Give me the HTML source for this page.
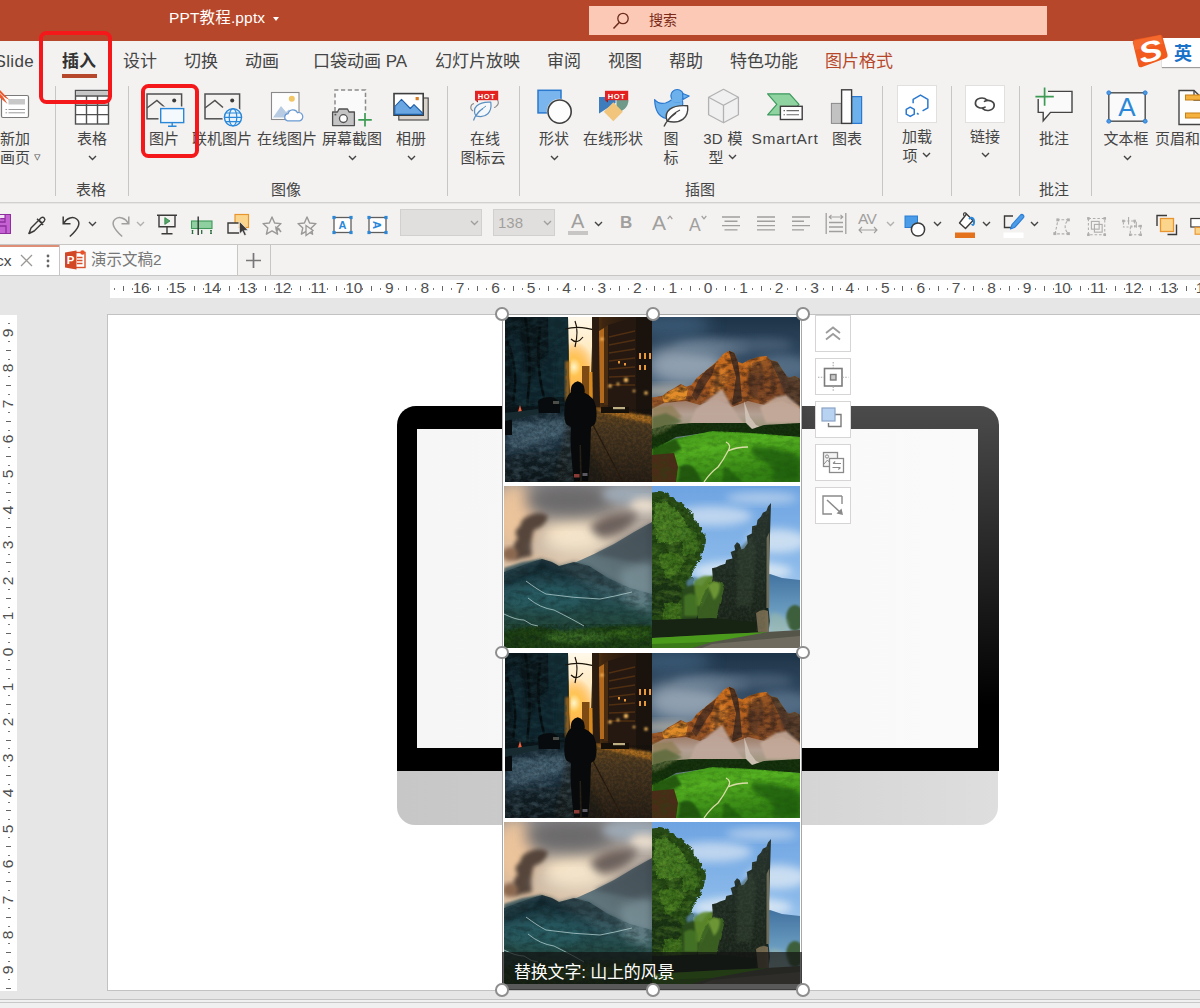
<!DOCTYPE html>
<html lang="zh-CN">
<head>
<meta charset="utf-8">
<title>PPT教程.pptx - PowerPoint</title>
<style>
*{box-sizing:border-box;margin:0;padding:0}
html,body{width:1200px;height:1008px;overflow:hidden;background:#e6e6e6}
body{position:relative;font-family:"Liberation Sans","Noto Sans CJK SC",sans-serif;color:#444;font-size:14px}
.abs{position:absolute}
svg{display:block;overflow:visible}
/* title bar */
#titlebar{position:absolute;left:0;top:0;width:1200px;height:41px;background:#b7472a}
#title{position:absolute;left:169px;top:8px;color:#fff;font-size:15.5px;letter-spacing:0.15px;line-height:20px;white-space:nowrap}
#search{position:absolute;left:589px;top:6px;width:458px;height:29px;background:#fbc9b6}
#search span{position:absolute;left:60px;top:4px;font-size:14px;line-height:20px;color:#7a2a17}
/* ribbon */
#ribbon{position:absolute;left:0;top:41px;width:1200px;height:162px;background:#f3f2f1;border-bottom:1px solid #d2d0ce}
.tab{position:absolute;top:9px;font-size:17px;line-height:24px;color:#444;white-space:nowrap}
.lbl{position:absolute;font-size:15px;line-height:19px;color:#444;white-space:nowrap;text-align:center;transform:translateX(-50%)}
.glbl{position:absolute;top:139px;font-size:15px;line-height:19px;color:#444;white-space:nowrap;transform:translateX(-50%)}
.sep{position:absolute;top:45px;width:1px;height:110px;background:#c8c6c4}
.ico{position:absolute}
.chev{position:absolute;width:9px;height:6px}
.redbox{position:absolute;border:4px solid #f4181b;border-radius:7.5px}
/* toolbar */
#qat{position:absolute;left:0;top:204px;width:1200px;height:41px;background:#f3f2f1;border-bottom:1px solid #c8c6c4}
/* doc tabs */
#doctabs{position:absolute;left:0;top:245px;width:1200px;height:31px;background:#f3f2f1;border-bottom:1px solid #c8c6c4}
/* workspace */
#work{position:absolute;left:0;top:276px;width:1200px;height:732px;background:#e6e6e6;overflow:hidden}
#hruler{position:absolute;left:110px;top:4px;width:1090px;height:18px;background:#fff}
#vruler{position:absolute;left:0;top:39px;width:17px;height:676px;background:#fff}
#slide{position:absolute;left:107px;top:38px;width:1202px;height:677px;background:#fff;border:1px solid #c2c2c2}

#hruler{overflow:hidden}
#vruler{overflow:hidden}
.rn{position:absolute;top:-1px;font-size:15.5px;line-height:18px;color:#505050;transform:translateX(-50%);letter-spacing:-0.3px}
.rt{position:absolute;top:6px;width:1px;height:5px;background:#666}
.rd{position:absolute;top:8px;width:1px;height:1.5px;background:#777}
.vn{position:absolute;left:8px;font-size:15.5px;line-height:18px;height:18px;color:#444;transform:translate(-50%,-50%) rotate(-90deg);letter-spacing:-0.3px;color:#505050}
.vt{position:absolute;left:6px;width:5px;height:1px;background:#666}
.vd{position:absolute;left:8px;width:1.5px;height:1px;background:#777}

.hd{position:absolute;width:13.6px;height:13.6px;border-radius:50%;background:#fff;border:2px solid #8e8e8e}
.fb{position:absolute;width:36px;height:37px;background:#fff;border:1px solid #d6d4d4}
</style>
</head>
<body>

<!-- ============ TITLE BAR ============ -->
<div id="titlebar">
  <div id="title">PPT教程.pptx <span style="display:inline-block;width:0;height:0;border-left:3.5px solid transparent;border-right:3.5px solid transparent;border-top:4px solid #fff;position:relative;top:-2px;left:3px"></span></div>
  <div id="search">
    <svg class="abs" style="left:22px;top:5px" width="20" height="20" viewBox="0 0 20 20"><circle cx="12" cy="7.5" r="5.2" fill="none" stroke="#6b2a1a" stroke-width="1.3"/><path d="M8.2 11.4 L2.5 17.5" stroke="#6b2a1a" stroke-width="1.5" fill="none"/></svg>
    <span>搜索</span>
  </div>
</div>

<!-- ============ RIBBON ============ -->
<div id="ribbon">
<div class="tab" style="left:-5.5px;letter-spacing:0.35px">Slide</div>
<div class="tab" style="left:62px;font-weight:bold;color:#333;">插入</div>
<div class="tab" style="left:123px;">设计</div>
<div class="tab" style="left:184px;">切换</div>
<div class="tab" style="left:245px;">动画</div>
<div class="tab" style="left:313px;">口袋动画 PA</div>
<div class="tab" style="left:435px;">幻灯片放映</div>
<div class="tab" style="left:547px;">审阅</div>
<div class="tab" style="left:608px;">视图</div>
<div class="tab" style="left:669px;">帮助</div>
<div class="tab" style="left:730px;">特色功能</div>
<div class="tab" style="left:825px;color:#b7472a;">图片格式</div>
<div class="abs" style="left:62px;top:33px;width:35px;height:4px;background:#b7472a"></div>

<div class="sep" style="left:55px"></div>
<div class="sep" style="left:128px"></div>
<div class="sep" style="left:447px"></div>
<div class="sep" style="left:519px"></div>
<div class="sep" style="left:882px"></div>
<div class="sep" style="left:951px"></div>
<div class="sep" style="left:1019px"></div>
<div class="sep" style="left:1091px"></div>
<div class="lbl" style="left:15px;top:88px">新加</div>
<div class="lbl" style="left:15px;top:107px">画页</div>
<div class="abs" style="left:34px;top:108px;font-size:13px;color:#555">▿</div>
<div class="lbl" style="left:92px;top:88px">表格</div>
<svg class="chev" style="left:87.5px;top:114px" viewBox="0 0 9 6"><path d="M1 1 L4.5 4.5 L8 1" fill="none" stroke="#444" stroke-width="1.4"/></svg>
<div class="lbl" style="left:164px;top:88px">图片</div>
<div class="lbl" style="left:222px;top:88px">联机图片</div>
<div class="lbl" style="left:287px;top:88px">在线图片</div>
<div class="lbl" style="left:352px;top:88px">屏幕截图</div>
<svg class="chev" style="left:347.5px;top:114px" viewBox="0 0 9 6"><path d="M1 1 L4.5 4.5 L8 1" fill="none" stroke="#444" stroke-width="1.4"/></svg>
<div class="lbl" style="left:411px;top:88px">相册</div>
<svg class="chev" style="left:406.5px;top:114px" viewBox="0 0 9 6"><path d="M1 1 L4.5 4.5 L8 1" fill="none" stroke="#444" stroke-width="1.4"/></svg>
<div class="lbl" style="left:485px;top:88px">在线</div>
<div class="lbl" style="left:483px;top:107px">图标云</div>
<div class="lbl" style="left:554px;top:88px">形状</div>
<svg class="chev" style="left:549.5px;top:114px" viewBox="0 0 9 6"><path d="M1 1 L4.5 4.5 L8 1" fill="none" stroke="#444" stroke-width="1.4"/></svg>
<div class="lbl" style="left:613px;top:88px">在线形状</div>
<div class="lbl" style="left:671px;top:88px">图</div>
<div class="lbl" style="left:671px;top:107px">标</div>
<div class="lbl" style="left:723px;top:88px;letter-spacing:0.3px">3D 模</div>
<div class="lbl" style="left:716px;top:107px">型</div>
<svg class="chev" style="left:727.5px;top:113px" viewBox="0 0 9 6"><path d="M1 1 L4.5 4.5 L8 1" fill="none" stroke="#444" stroke-width="1.4"/></svg>
<div class="lbl" style="left:785px;top:88px;letter-spacing:0.75px;font-size:15.5px">SmartArt</div>
<div class="lbl" style="left:847px;top:88px">图表</div>
<div class="lbl" style="left:917px;top:86px">加载</div>
<div class="lbl" style="left:910px;top:105px">项</div>
<svg class="chev" style="left:921.5px;top:111px" viewBox="0 0 9 6"><path d="M1 1 L4.5 4.5 L8 1" fill="none" stroke="#444" stroke-width="1.4"/></svg>
<div class="lbl" style="left:985px;top:86px">链接</div>
<svg class="chev" style="left:980.5px;top:111px" viewBox="0 0 9 6"><path d="M1 1 L4.5 4.5 L8 1" fill="none" stroke="#444" stroke-width="1.4"/></svg>
<div class="lbl" style="left:1054px;top:88px">批注</div>
<div class="lbl" style="left:1126px;top:88px">文本框</div>
<svg class="chev" style="left:1122.5px;top:114px" viewBox="0 0 9 6"><path d="M1 1 L4.5 4.5 L8 1" fill="none" stroke="#444" stroke-width="1.4"/></svg>
<div class="lbl" style="left:1155px;top:88px;transform:none">页眉和</div>
<div class="glbl" style="left:91px">表格</div>
<div class="glbl" style="left:286px">图像</div>
<div class="glbl" style="left:700px">插图</div>
<div class="glbl" style="left:1054px">批注</div>
<svg class="abs" style="left:0;top:0" width="1200" height="162" viewBox="0 41 1200 162">
<rect x="1.5" y="95.5" width="27" height="22" rx="1.5" fill="#fff" stroke="#7a7a7a" stroke-width="1.2"/><rect x="8.5" y="99" width="16.5" height="5.5" fill="#c8c8c8"/><path d="M5.5 109.5 h1.6 M8.5 109.5 H25 M5.5 112.8 h1.6 M8.5 112.8 H25" stroke="#9a9a9a" stroke-width="1"/><path d="M-2 88 L9.5 100 L3 96.5 L7.5 104 L-2 96Z" fill="#ea5a2e"/><path d="M-2 91.5 L7 100" stroke="#fff" stroke-width="0.8"/>
<rect x="75.5" y="90.5" width="33" height="33.5" fill="#fff" stroke="#505050" stroke-width="1.4"/><rect x="76.2" y="91.2" width="31.6" height="4.4" fill="#c6c6c6"/><path d="M75.5 96 H108.5 M75.5 105.3 H108.5 M75.5 114.6 H108.5 M86.5 96 V124 M97.5 96 V124" stroke="#505050" stroke-width="1.4" fill="none"/>
<rect x="147" y="94" width="34.6" height="24.8" fill="none" stroke="#505050" stroke-width="1.5"/><path d="M147 108 L156.9 100.4 L165 107.5" fill="none" stroke="#505050" stroke-width="1.5"/><circle cx="174.2" cy="100.6" r="2" fill="#3a3a3a"/><rect x="158.5" y="106.5" width="27" height="14" fill="#f3f2f1"/><rect x="160.7" y="108.6" width="23" height="14" fill="#f4f9fe" stroke="#2b88d8" stroke-width="1.4"/><path d="M172.2 122.6 V126 M168 126.3 H176.5" stroke="#2b88d8" stroke-width="1.4"/>
<rect x="205" y="94" width="34.6" height="24.8" fill="none" stroke="#505050" stroke-width="1.5"/><path d="M205 108 L214.9 100.4 L223 107.5" fill="none" stroke="#505050" stroke-width="1.5"/><circle cx="232.2" cy="100.6" r="2" fill="#3a3a3a"/><circle cx="233" cy="117.3" r="10.6" fill="#f3f2f1"/><circle cx="233" cy="117.3" r="8.6" fill="#e9f3fc" stroke="#2b88d8" stroke-width="1.4"/><ellipse cx="233" cy="117.3" rx="3.8" ry="8.6" fill="none" stroke="#2b88d8" stroke-width="1.2"/><path d="M224.4 117.3 H241.6 M225.6 113 H240.4 M225.6 121.6 H240.4" stroke="#2b88d8" stroke-width="1.2" fill="none"/>
<rect x="271.5" y="92.5" width="27.5" height="27" fill="#fdfdfd" stroke="#8a8a8a" stroke-width="1.1"/><circle cx="291.8" cy="98.8" r="3" fill="#f2c664"/><path d="M273 117.5 L281 106 L286 112 L289 109.5 L294 117.5Z" fill="#b7cbe2"/><path d="M287.5 120.8 a3.6 3.6 0 0 1 0.6 -7.1 a5 5 0 0 1 9.4 -1 a4 4 0 0 1 2.2 8.1 Z" fill="#fff" stroke="#6a9ad2" stroke-width="1.2"/>
<rect x="335" y="90" width="30.5" height="30" fill="#fafafa"/><path d="M335 118 V90 H365.5 V113" fill="none" stroke="#8a8a8a" stroke-width="1.5" stroke-dasharray="4.2 2.6"/><path d="M332.6 112 H337.5 L339 109 H347.5 L349 112 H354.4 V125.6 H332.6Z" fill="#c4c4c4" stroke="#505050" stroke-width="1.3" stroke-linejoin="round"/><circle cx="343.4" cy="118.6" r="3.9" fill="#fff" stroke="#505050" stroke-width="1.3"/><rect x="334.5" y="113.8" width="1.8" height="1.6" fill="#505050"/><path d="M365 113 V126.5 M358.3 119.8 H371.8" stroke="#3c9a54" stroke-width="1.7"/>
<rect x="398.8" y="98" width="29.4" height="22" fill="#d9d3cc" stroke="#505050" stroke-width="1.2"/><rect x="394" y="93.6" width="29.2" height="21.6" fill="#fff" stroke="#3e3e3e" stroke-width="1.6"/><path d="M394.8 106.5 L401.5 99.3 L410.3 108.5 L414 104.6 L422.4 113 V114.4 H394.8Z" fill="#69a6e2" stroke="#1f5fa8" stroke-width="1.1" stroke-linejoin="round"/><rect x="415.6" y="97" width="3.2" height="3.2" fill="#d97b22"/>
<path d="M474 103.5 a4 4 0 0 0 -1 7.5 M493 98 a4.5 4.5 0 0 1 3.5 8 a3 3 0 0 1 -2.5 1.5" fill="none" stroke="#8a8a8a" stroke-width="1.1"/><path d="M473.5 120.5 Q476 113 483 108.5 M475.8 115.8 C471.5 108 478 101.5 490.8 102.2 C492.2 112 486.5 118.8 475.8 115.8Z" fill="#f4f8fb" stroke="#5b8fc0" stroke-width="1.2" stroke-linejoin="round"/><path d="M476.5 115 Q480 109.5 486 106" fill="none" stroke="#5b8fc0" stroke-width="1"/><rect x="475" y="90.8" width="23.2" height="9.4" fill="#e3211f"/><path d="M475 100.2 l3 2.2 v-2.2z" fill="#a01010"/><text x="486.6" y="98.6" font-size="7.6" font-weight="bold" fill="#fff" text-anchor="middle" font-family="Liberation Sans,sans-serif" letter-spacing="0.6">HOT</text>
<rect x="538" y="90.3" width="23" height="22.6" fill="#7ab5ee" stroke="#2a78cf" stroke-width="1.5"/><circle cx="559.6" cy="111.6" r="12.8" fill="#f3f2f1"/><circle cx="559.6" cy="111.6" r="11.6" fill="#fdfdfd" stroke="#3e3e3e" stroke-width="1.6"/>
<path d="M599 97 H615.5 V103 L599 113.5Z" fill="#3e7dbd"/><path d="M616.5 100 H628.5 A12 12 0 0 1 616.5 112Z" fill="#6f9a8a"/><path d="M613.3 102.3 L622.8 111.8 L613.3 121.3 L603.8 111.8Z" fill="#f2c57c"/><rect x="605" y="90.8" width="23.2" height="9.4" fill="#e3211f"/><path d="M605 100.2 l3 2.2 v-2.2z" fill="#a01010"/><text x="616.6" y="98.6" font-size="7.6" font-weight="bold" fill="#fff" text-anchor="middle" font-family="Liberation Sans,sans-serif" letter-spacing="0.6">HOT</text>
<path d="M654.6 99.6 Q659 104.6 665.5 103 Q669.5 101.8 671.6 99.6 L682.5 100.5 Q684 108 678 114 Q672 119.5 666 118.5 C659 117 655 110 654.6 99.6Z" fill="#6db1ec" stroke="#2a78cf" stroke-width="1.2" stroke-linejoin="round"/><circle cx="677.2" cy="95.8" r="6.3" fill="#6db1ec" stroke="#2a78cf" stroke-width="1.2"/><path d="M682.6 93.6 L689.2 96 L683 99.4Z" fill="#6db1ec" stroke="#2a78cf" stroke-width="1.1" stroke-linejoin="round"/><path d="M671.5 99 Q676 103.5 682 100" fill="none" stroke="#6db1ec" stroke-width="2.2"/><path d="M664 126.5 Q667 119.5 676 113 M667 121 C663.5 111 671.5 104.5 687.6 105.8 C689 117.5 681 124.5 667 121Z" fill="#fdfdfd" stroke="#444" stroke-width="1.4" stroke-linejoin="round"/><path d="M668 120.3 Q672 114 680 110" fill="none" stroke="#444" stroke-width="1.2"/>
<path d="M723.5 89.3 L738.4 97.3 V114.8 L723.5 122.8 L708.6 114.8 V97.3Z" fill="#f0f0f0" stroke="#b2b2b2" stroke-width="1.3" stroke-linejoin="round"/><path d="M708.6 97.3 L723.5 105.3 L738.4 97.3 M723.5 105.3 V122.8" fill="none" stroke="#b2b2b2" stroke-width="1.3"/>
<path d="M767.6 93.8 H789.6 L799 104.3 L789.6 114.8 H767.6 L776.8 104.3Z" fill="#8fd3a0" stroke="#3c9a5c" stroke-width="1.2" stroke-linejoin="round"/><rect x="780.4" y="106.3" width="21.8" height="13.2" fill="#fdfdfd" stroke="#3e3e3e" stroke-width="1.4"/><path d="M783.5 110.6 h1.5 M786.5 110.6 H799 M783.5 114.8 h1.5 M786.5 114.8 H799" stroke="#6a6a6a" stroke-width="1.1"/>
<rect x="831.4" y="103.4" width="10" height="20" fill="#c2c2c2" stroke="#8a8a8a" stroke-width="1"/><rect x="851.6" y="96.6" width="10" height="26.8" fill="#6db1ec" stroke="#2a78cf" stroke-width="1.2"/><rect x="841.6" y="89.8" width="10" height="33.6" fill="#fdfdfd" stroke="#3e3e3e" stroke-width="1.4"/>
<rect x="897.5" y="85.5" width="39" height="37" fill="#fff" stroke="#e2e0de" stroke-width="1"/><g transform="translate(917.5 103) scale(1.15) translate(-917.5 -103) translate(-0.5 2.2)"><path d="M914.2 101 V97.6 L920.6 93.9 L927 97.6 V105 L922.4 107.7 M917.5 109.7 L919 110.6" fill="none" stroke="#2a78cf" stroke-width="1.3" stroke-linejoin="round"/><path d="M911.7 104.4 L915.2 106.4 V110.5 L911.7 112.5 L908.2 110.5 V106.4Z" fill="none" stroke="#2a78cf" stroke-width="1.3" stroke-linejoin="round"/></g>
<rect x="965.5" y="85.5" width="39" height="37" fill="#fff" stroke="#e2e0de" stroke-width="1"/><g transform="translate(984.8 104) scale(1.3 1.15) translate(-984.8 -104) translate(0 0.3)"><path d="M986.5 100.2 C983.5 97.2 978 98.5 977.6 102.6 C977.3 106.6 982 108.3 985 106.4 M983 107.6 C986 110.6 991.6 109.4 992 105.2 C992.3 101.2 987.6 99.5 984.6 101.4" fill="none" stroke="#444" stroke-width="1.35" stroke-linecap="round"/></g>
<path d="M1038.2 91.4 H1072 V112.4 H1050.5 L1043.2 120.8 V112.4 H1038.2Z" fill="#fafafa" stroke="#444" stroke-width="1.4" stroke-linejoin="miter"/><rect x="1034" y="87" width="14" height="12" fill="#f3f2f1"/><path d="M1044.6 87.4 V105.8 M1035.4 96.6 H1053.8" stroke="#3c9a54" stroke-width="1.7"/>
<rect x="1108.8" y="92.8" width="36.4" height="28.4" fill="#fafafa" stroke="#555" stroke-width="1.5"/><text x="1127" y="116.2" font-size="26" fill="#2b88d8" text-anchor="middle" font-family="Liberation Sans,sans-serif">A</text><circle cx="1108.8" cy="92.8" r="2" fill="#4a9be8" stroke="#2a78cf" stroke-width="0.8"/><circle cx="1145.2" cy="92.8" r="2" fill="#4a9be8" stroke="#2a78cf" stroke-width="0.8"/><circle cx="1108.8" cy="121.2" r="2" fill="#4a9be8" stroke="#2a78cf" stroke-width="0.8"/><circle cx="1145.2" cy="121.2" r="2" fill="#4a9be8" stroke="#2a78cf" stroke-width="0.8"/>
<path d="M1179 90.5 H1194 L1204 100 V124.5 H1179Z" fill="#fdfdfd" stroke="#444" stroke-width="1.4"/><path d="M1194 90.5 V100 H1204" fill="none" stroke="#444" stroke-width="1.3"/><rect x="1185.5" y="95" width="16" height="5" fill="#f4b13e" stroke="#c87f14" stroke-width="1"/><rect x="1185.5" y="113" width="16" height="5" fill="#f4b13e" stroke="#c87f14" stroke-width="1"/>
</svg>


</div>

<!-- ============ QUICK ACCESS TOOLBAR ============ -->
<div id="qat">
<svg class="abs" style="left:-10px;top:10px" width="21" height="20" viewBox="0 0 21 20"><rect x="0.5" y="0.5" width="20" height="19" fill="#c661d3" stroke="#8d2f9c"/><path d="M5 0.5V8H15V0.5M10.5 4.5H15M4 19.5V12H16V19.5M4 15.5H10" fill="none" stroke="#8d2f9c" stroke-width="1.3"/><rect x="5.6" y="1" width="8.8" height="3" fill="#f3e1f6"/><rect x="4.7" y="12.6" width="5" height="2.4" fill="#f3e1f6"/><rect x="4.7" y="16.2" width="5" height="3" fill="#f3e1f6"/></svg>
<svg class="abs" style="left:26px;top:10px" width="22" height="22" viewBox="0 0 22 22"><path d="M3 19.5 L5 14 L15.2 3.8 a2.2 2.2 0 0 1 3.1 3.1 L8.2 17 Z M12.5 5.5 l4 4 M11 4.8 l6.2 6.2" fill="none" stroke="#3b3a39" stroke-width="1.4" stroke-linejoin="round"/><path d="M2.2 20 L5.5 18.6 L3.6 16.8Z" fill="#3b3a39"/></svg>
<svg class="abs" style="left:61px;top:10px" width="22" height="24" viewBox="0 0 22 24"><path d="M2.2 2.5 V9.8 H9.5" fill="none" stroke="#3b3a39" stroke-width="1.5"/><path d="M2.6 9.4 C6 3.5 12 2.2 15.6 5 C19.8 8.4 18.6 13.5 8.8 22.5" fill="none" stroke="#3b3a39" stroke-width="1.5"/></svg>
<svg class="chev" style="left:87.5px;top:17px" viewBox="0 0 9 6"><path d="M1 1 L4.5 4.5 L8 1" fill="none" stroke="#444" stroke-width="1.4"/></svg>
<svg class="abs" style="left:109px;top:10px" width="22" height="24" viewBox="0 0 22 24"><path d="M19.8 2.5 V9.8 H12.5" fill="none" stroke="#a19f9d" stroke-width="1.5"/><path d="M19.4 9.4 C16 3.5 10 2.2 6.4 5 C2.2 8.4 3.4 13.5 13.2 22.5" fill="none" stroke="#a19f9d" stroke-width="1.5"/></svg>
<svg class="chev" style="left:135.5px;top:17px" viewBox="0 0 9 6"><path d="M1 1 L4.5 4.5 L8 1" fill="none" stroke="#b3b1af" stroke-width="1.4"/></svg>
<svg class="abs" style="left:156px;top:10px" width="22" height="22" viewBox="0 0 22 22"><path d="M1 1.2 H21 M3 1.2 V12.8 H19 V1.2 M11 12.8 V19.5 M5.5 19.8 H16.5" fill="none" stroke="#3b3a39" stroke-width="1.4"/><path d="M8.8 3.6 L14 7 L8.8 10.4Z" fill="#55a868" stroke="#2e7d46" stroke-width="0.8"/></svg>
<svg class="abs" style="left:190px;top:12px" width="25" height="20" viewBox="0 0 25 20"><rect x="1.5" y="5" width="20.5" height="7.5" fill="#8fd0a0" stroke="#3f9a5a" stroke-width="1.1"/><path d="M8.2 0.5 V19" stroke="#333" stroke-width="1.4" fill="none"/><path d="M2.5 14 v4 M21 14 v4 M11.7 14 v4" stroke="#2a6b3c" stroke-width="1.3" fill="none"/><path d="M2.5 14 v1 M2.5 17 v1 M21 14 v1 M21 17 v1" stroke="#2a6b3c" stroke-width="1.4"/></svg>
<svg class="abs" style="left:226px;top:9px" width="24" height="24" viewBox="0 0 24 24"><rect x="9" y="1.5" width="13.5" height="13" fill="#fbd58b" stroke="#e8952f" stroke-width="1.2"/><path d="M12.5 10 H2 V20 H13" fill="#f3f2f1" stroke="#3b3a39" stroke-width="1.4"/><path d="M13.5 8.5 L13.5 21 L16.4 18.2 L18.4 22.6 L20.3 21.7 L18.3 17.5 L22 17.2Z" fill="#3b3a39" stroke="#f3f2f1" stroke-width="0.6"/></svg>
<svg class="abs" style="left:261px;top:10.5px" width="24" height="24" viewBox="0 0 24 24"><path d="M11 2 L13.6 8 L20 8.6 L15.2 12.9 L16.6 19.2 L11 15.9 L5.4 19.2 L6.8 12.9 L2 8.6 L8.4 8Z" fill="none" stroke="#9a9896" stroke-width="1.4" stroke-linejoin="round"/><path d="M14 11 l5 3 l-4 3z" fill="#9a9896"/><path d="M17 13 l3 4" stroke="#9a9896" stroke-width="1.6"/></svg>
<svg class="abs" style="left:296px;top:10.5px" width="24" height="24" viewBox="0 0 24 24"><path d="M11 2 L13.6 8 L20 8.6 L15.2 12.9 L16.6 19.2 L11 15.9 L5.4 19.2 L6.8 12.9 L2 8.6 L8.4 8Z" fill="none" stroke="#9a9896" stroke-width="1.4" stroke-linejoin="round"/><path d="M10 10.5 L17 15.5 L10 20.5Z" fill="#f3f2f1" stroke="#9a9896" stroke-width="1.3"/></svg>
<svg class="abs" style="left:332px;top:11px" width="21" height="20" viewBox="0 0 21 20"><rect x="2" y="2.5" width="17" height="15" fill="#fff" stroke="#605e5c" stroke-width="1.3"/><text x="10.5" y="14.2" font-size="11" font-weight="bold" text-anchor="middle" fill="#2b88d8" font-family="Liberation Sans,sans-serif">A</text><rect x="0.3999999999999999" y="0.8999999999999999" width="3.2" height="3.2" fill="#2b88d8"/><rect x="17.4" y="0.8999999999999999" width="3.2" height="3.2" fill="#2b88d8"/><rect x="0.3999999999999999" y="15.9" width="3.2" height="3.2" fill="#2b88d8"/><rect x="17.4" y="15.9" width="3.2" height="3.2" fill="#2b88d8"/></svg>
<svg class="abs" style="left:367px;top:11px" width="21" height="20" viewBox="0 0 21 20"><rect x="2" y="2.5" width="17" height="15" fill="#fff" stroke="#605e5c" stroke-width="1.3"/><text x="10.5" y="14.2" font-size="11" font-weight="bold" text-anchor="middle" fill="#2b88d8" font-family="Liberation Sans,sans-serif" transform="rotate(90 10.5 10)">A</text><rect x="0.3999999999999999" y="0.8999999999999999" width="3.2" height="3.2" fill="#2b88d8"/><rect x="17.4" y="0.8999999999999999" width="3.2" height="3.2" fill="#2b88d8"/><rect x="0.3999999999999999" y="15.9" width="3.2" height="3.2" fill="#2b88d8"/><rect x="17.4" y="15.9" width="3.2" height="3.2" fill="#2b88d8"/></svg>
<div class="abs" style="left:400px;top:5px;width:82px;height:27px;background:#e1dfdd;border:1px solid #d2d0ce"></div>
<svg class="chev" style="left:469.5px;top:16px" viewBox="0 0 9 6"><path d="M1 1 L4.5 4.5 L8 1" fill="none" stroke="#a19f9d" stroke-width="1.4"/></svg>
<div class="abs" style="left:493px;top:5px;width:62px;height:27px;background:#e1dfdd;border:1px solid #d2d0ce"><span style="position:absolute;left:4px;top:3px;font-size:15px;line-height:19px;color:#a19f9d">138</span></div>
<svg class="chev" style="left:542.5px;top:16px" viewBox="0 0 9 6"><path d="M1 1 L4.5 4.5 L8 1" fill="none" stroke="#a19f9d" stroke-width="1.4"/></svg>
<div class="abs" style="left:571px;top:4px;font-size:20px;line-height:26px;color:#a19f9d">A</div><div class="abs" style="left:568px;top:27px;width:20px;height:4px;background:#c8c6c4"></div>
<svg class="chev" style="left:593.5px;top:17px" viewBox="0 0 9 6"><path d="M1 1 L4.5 4.5 L8 1" fill="none" stroke="#444" stroke-width="1.4"/></svg>
<div class="abs" style="left:620px;top:8px;font-size:17px;line-height:22px;font-weight:bold;color:#a19f9d">B</div>
<div class="abs" style="left:652px;top:5px;font-size:21px;line-height:28px;color:#a19f9d">A</div><svg class="abs" style="left:667px;top:11px" width="6" height="5" viewBox="0 0 6 5"><path d="M0.7 4 L3 1.2 L5.3 4" fill="none" stroke="#a19f9d" stroke-width="1.2"/></svg>
<div class="abs" style="left:689px;top:9px;font-size:17.5px;line-height:24px;color:#a19f9d">A</div><svg class="abs" style="left:701px;top:11px" width="6" height="5" viewBox="0 0 6 5"><path d="M0.7 1 L3 3.8 L5.3 1" fill="none" stroke="#a19f9d" stroke-width="1.2"/></svg>
<svg class="abs" style="left:722px;top:12px" width="19" height="15" viewBox="0 0 19 15"><path d="M0 1 H18 M2.5 5.3 H15.5 M0 9.6 H18 M2.5 13.9 H15.5 " stroke="#a19f9d" stroke-width="1.4" fill="none"/></svg>
<svg class="abs" style="left:757px;top:12px" width="19" height="15" viewBox="0 0 19 15"><path d="M0 1 H18 M0 5.3 H18 M0 9.6 H18 M0 13.9 H18 " stroke="#a19f9d" stroke-width="1.4" fill="none"/></svg>
<svg class="abs" style="left:792px;top:12px" width="19" height="15" viewBox="0 0 19 15"><path d="M0 1 H18 M0 5.3 H12 M0 9.6 H18 M0 13.9 H12 " stroke="#a19f9d" stroke-width="1.4" fill="none"/></svg>
<svg class="abs" style="left:825px;top:9px" width="22" height="22" viewBox="0 0 22 22"><path d="M1.2 0 V21 M20.8 0 V21 M4 9.5 H18 M4 14 H18 M4 18.5 H18" stroke="#a19f9d" stroke-width="1.3" fill="none"/><path d="M4 4 H18 M6.5 1.8 L4.2 4 L6.5 6.2 M15.5 1.8 L17.8 4 L15.5 6.2" stroke="#a19f9d" stroke-width="1.1" fill="none"/></svg>
<div class="abs" style="left:858px;top:6px;font-size:15.5px;line-height:18px;color:#a19f9d;letter-spacing:-0.6px">AV</div><svg class="abs" style="left:858px;top:22px" width="20" height="8" viewBox="0 0 20 8"><path d="M1 4 H19 M4 1 L1 4 L4 7 M16 1 L19 4 L16 7" stroke="#a19f9d" stroke-width="1.1" fill="none"/></svg>
<svg class="chev" style="left:885.5px;top:17px" viewBox="0 0 9 6"><path d="M1 1 L4.5 4.5 L8 1" fill="none" stroke="#b3b1af" stroke-width="1.4"/></svg>
<svg class="abs" style="left:904px;top:11px" width="23" height="23" viewBox="0 0 23 23"><rect x="1" y="1" width="12.5" height="11.5" fill="#4a9be8" stroke="#2b7cd3" stroke-width="1"/><circle cx="14" cy="14.5" r="6.6" fill="#fff" stroke="#3b3a39" stroke-width="1.5"/></svg>
<svg class="chev" style="left:932.5px;top:17px" viewBox="0 0 9 6"><path d="M1 1 L4.5 4.5 L8 1" fill="none" stroke="#444" stroke-width="1.4"/></svg>
<svg class="abs" style="left:955px;top:7px" width="22" height="28" viewBox="0 0 22 28"><path d="M4.5 12 L11.5 3 L18 9.5 L10.5 17.5Z" fill="#fff" stroke="#3b3a39" stroke-width="1.4" stroke-linejoin="round"/><path d="M11.5 3 C10 0.5 7.5 2 9 5" fill="none" stroke="#3b3a39" stroke-width="1.2"/><path d="M14 8 C17 5.5 19.5 7 19 12 C18.8 14 17.5 14.6 17 13" fill="none" stroke="#2b88d8" stroke-width="2"/><rect x="0" y="21.5" width="20" height="5.5" fill="#e4711b"/></svg>
<svg class="chev" style="left:981.5px;top:17px" viewBox="0 0 9 6"><path d="M1 1 L4.5 4.5 L8 1" fill="none" stroke="#444" stroke-width="1.4"/></svg>
<svg class="abs" style="left:1003px;top:8px" width="24" height="28" viewBox="0 0 24 28"><path d="M10 4 H1.5 V15.5 H8" fill="none" stroke="#3b3a39" stroke-width="1.4"/><path d="M7.5 17 L9 12.5 L17.5 3 a2 2 0 0 1 3 2.6 L12 15.2 Z" fill="#4a9be8" stroke="#2b7cd3" stroke-width="1.1" stroke-linejoin="round"/><rect x="0.5" y="20.5" width="20" height="5.5" fill="#fff"/></svg>
<svg class="chev" style="left:1029.5px;top:17px" viewBox="0 0 9 6"><path d="M1 1 L4.5 4.5 L8 1" fill="none" stroke="#444" stroke-width="1.4"/></svg>
<svg class="abs" style="left:1050px;top:11.5px;transform:scale(0.86);transform-origin:50% 50%" width="23" height="22" viewBox="0 0 23 22"><path d="M4 19 L7.5 2.5 H19.5 C14 8 15 14 19.5 19Z" fill="none" stroke="#b0aeac" stroke-width="1.3" stroke-dasharray="3.2 2"/><rect x="2" y="17" width="3.4" height="3.4" fill="#b0aeac"/><rect x="17.8" y="17" width="3.4" height="3.4" fill="#b0aeac"/><rect x="5.5" y="1" width="3.4" height="3.4" fill="#b0aeac"/><rect x="17.8" y="1" width="3.4" height="3.4" fill="#b0aeac"/></svg>
<svg class="abs" style="left:1085px;top:10.5px;transform:scale(0.86);transform-origin:50% 50%" width="24" height="24" viewBox="0 0 24 24"><rect x="2" y="2" width="19" height="19" fill="none" stroke="#b0aeac" stroke-width="1.2" stroke-dasharray="3 2.2"/><rect x="5.5" y="5.5" width="9" height="9" fill="none" stroke="#b0aeac" stroke-width="1.3"/><rect x="9" y="9" width="9" height="9" fill="none" stroke="#b0aeac" stroke-width="1.3"/><rect x="0.5" y="0.5" width="3" height="3" fill="#b0aeac"/><rect x="19.5" y="0.5" width="3" height="3" fill="#b0aeac"/><rect x="0.5" y="19.5" width="3" height="3" fill="#b0aeac"/><rect x="19.5" y="19.5" width="3" height="3" fill="#b0aeac"/></svg>
<svg class="abs" style="left:1120px;top:10.5px;transform:scale(0.86);transform-origin:50% 50%" width="24" height="24" viewBox="0 0 24 24"><rect x="2" y="5" width="13" height="7" fill="none" stroke="#b0aeac" stroke-width="1.2" stroke-dasharray="2.5 2"/><rect x="10" y="11" width="12" height="10" fill="none" stroke="#b0aeac" stroke-width="1.2" stroke-dasharray="2.5 2"/><path d="M8 0.5 V9 M17 6 V13" stroke="#b0aeac" stroke-width="1.3"/><rect x="0.5" y="3.5" width="3" height="3" fill="#b0aeac"/><rect x="13.5" y="3.5" width="3" height="3" fill="#b0aeac"/><rect x="8.5" y="19.5" width="3" height="3" fill="#b0aeac"/><rect x="20.5" y="19.5" width="3" height="3" fill="#b0aeac"/><rect x="20.5" y="9.5" width="3" height="3" fill="#b0aeac"/></svg>
<svg class="abs" style="left:1155px;top:9px" width="24" height="24" viewBox="0 0 24 24"><path d="M12 2.5 H2 V13" fill="none" stroke="#3b3a39" stroke-width="1.4"/><path d="M12.5 21.5 H21.5 V11.5" fill="none" stroke="#3b3a39" stroke-width="1.4"/><rect x="5.5" y="5.5" width="13" height="13" fill="#fbd58b" stroke="#e8952f" stroke-width="1.3"/></svg>
<svg class="abs" style="left:1190px;top:11px;transform:scale(0.85);transform-origin:0 50%" width="14" height="24" viewBox="0 0 14 24"><rect x="1" y="2" width="12" height="10" fill="#fff" stroke="#3b3a39" stroke-width="1.4"/><rect x="6" y="12.5" width="9" height="8" fill="#fbd58b" stroke="#e8952f" stroke-width="1.3"/></svg>

</div>

<!-- ============ DOC TABS ============ -->
<div id="doctabs">
<div class="abs" style="left:0;top:0;width:59px;height:30px;background:#fff;border-top:2px solid #dc8e76"></div>
<div class="abs" style="left:-4px;top:6px;font-size:15.5px;line-height:20px;color:#444">cx</div>
<svg class="abs" style="left:20px;top:9px" width="13" height="13" viewBox="0 0 13 13"><path d="M1 1 L12 12 M12 1 L1 12" stroke="#9a9896" stroke-width="1.3"/></svg>
<svg class="abs" style="left:46px;top:9px" width="4" height="14" viewBox="0 0 4 14"><circle cx="2" cy="2" r="1.4" fill="#666"/><circle cx="2" cy="7" r="1.4" fill="#666"/><circle cx="2" cy="12" r="1.4" fill="#666"/></svg>
<div class="abs" style="left:59px;top:0;width:179px;height:30px;background:#fafafa;border-left:1px solid #c8c6c4;border-right:1px solid #c8c6c4"></div>
<svg class="abs" style="left:65px;top:5px" width="21" height="20" viewBox="0 0 21 20"><rect x="8" y="2.5" width="12" height="15" fill="#fff" stroke="#d9512c" stroke-width="1.4"/><path d="M12 7.5 H17.5 M12 10.5 H17.5 M12 13.5 H17.5" stroke="#d9512c" stroke-width="1.5"/><circle cx="17.5" cy="2.5" r="2.3" fill="#e8502a"/><path d="M0 2.6 L11.5 0.5 V19.5 L0 17.4Z" fill="#d24726"/><text x="5.6" y="14.3" font-size="11.5" font-weight="bold" text-anchor="middle" fill="#fff" font-family="Liberation Sans,sans-serif">P</text></svg>
<div class="abs" style="left:91px;top:4px;font-size:15.5px;line-height:22px;color:#767676;white-space:nowrap">演示文稿2</div>
<div class="abs" style="left:238px;top:0;width:33px;height:30px;border-right:1px solid #c8c6c4"></div>
<svg class="abs" style="left:246px;top:8px" width="15" height="15" viewBox="0 0 15 15"><path d="M7.5 0 V15 M0 7.5 H15" stroke="#777" stroke-width="1.7"/></svg>

</div>

<!-- ============ WORKSPACE ============ -->
<div id="work">
  <div id="hruler"><i class="rt" style="left:12.9px"></i><i class="rd" style="left:4.0px"></i><i class="rd" style="left:21.8px"></i><span class="rn" style="left:31.1px">16</span><i class="rt" style="left:48.3px"></i><i class="rd" style="left:39.5px"></i><i class="rd" style="left:57.2px"></i><span class="rn" style="left:66.5px">15</span><i class="rt" style="left:83.8px"></i><i class="rd" style="left:74.9px"></i><i class="rd" style="left:92.6px"></i><span class="rn" style="left:102.0px">14</span><i class="rt" style="left:119.2px"></i><i class="rd" style="left:110.3px"></i><i class="rd" style="left:128.1px"></i><span class="rn" style="left:137.4px">13</span><i class="rt" style="left:154.6px"></i><i class="rd" style="left:145.8px"></i><i class="rd" style="left:163.5px"></i><span class="rn" style="left:172.8px">12</span><i class="rt" style="left:190.1px"></i><i class="rd" style="left:181.2px"></i><i class="rd" style="left:198.9px"></i><span class="rn" style="left:208.3px">11</span><i class="rt" style="left:225.5px"></i><i class="rd" style="left:216.6px"></i><i class="rd" style="left:234.3px"></i><span class="rn" style="left:243.7px">10</span><i class="rt" style="left:260.9px"></i><i class="rd" style="left:252.1px"></i><i class="rd" style="left:269.8px"></i><span class="rn" style="left:279.1px">9</span><i class="rt" style="left:296.3px"></i><i class="rd" style="left:287.5px"></i><i class="rd" style="left:305.2px"></i><span class="rn" style="left:314.6px">8</span><i class="rt" style="left:331.8px"></i><i class="rd" style="left:322.9px"></i><i class="rd" style="left:340.6px"></i><span class="rn" style="left:350.0px">7</span><i class="rt" style="left:367.2px"></i><i class="rd" style="left:358.3px"></i><i class="rd" style="left:376.1px"></i><span class="rn" style="left:385.4px">6</span><i class="rt" style="left:402.6px"></i><i class="rd" style="left:393.8px"></i><i class="rd" style="left:411.5px"></i><span class="rn" style="left:420.9px">5</span><i class="rt" style="left:438.1px"></i><i class="rd" style="left:429.2px"></i><i class="rd" style="left:446.9px"></i><span class="rn" style="left:456.3px">4</span><i class="rt" style="left:473.5px"></i><i class="rd" style="left:464.6px"></i><i class="rd" style="left:482.4px"></i><span class="rn" style="left:491.7px">3</span><i class="rt" style="left:508.9px"></i><i class="rd" style="left:500.1px"></i><i class="rd" style="left:517.8px"></i><span class="rn" style="left:527.1px">2</span><i class="rt" style="left:544.4px"></i><i class="rd" style="left:535.5px"></i><i class="rd" style="left:553.2px"></i><span class="rn" style="left:562.6px">1</span><i class="rt" style="left:579.8px"></i><i class="rd" style="left:570.9px"></i><i class="rd" style="left:588.6px"></i><span class="rn" style="left:598.0px">0</span><i class="rt" style="left:615.2px"></i><i class="rd" style="left:606.4px"></i><i class="rd" style="left:624.1px"></i><span class="rn" style="left:633.4px">1</span><i class="rt" style="left:650.6px"></i><i class="rd" style="left:641.8px"></i><i class="rd" style="left:659.5px"></i><span class="rn" style="left:668.9px">2</span><i class="rt" style="left:686.1px"></i><i class="rd" style="left:677.2px"></i><i class="rd" style="left:694.9px"></i><span class="rn" style="left:704.3px">3</span><i class="rt" style="left:721.5px"></i><i class="rd" style="left:712.6px"></i><i class="rd" style="left:730.4px"></i><span class="rn" style="left:739.7px">4</span><i class="rt" style="left:756.9px"></i><i class="rd" style="left:748.1px"></i><i class="rd" style="left:765.8px"></i><span class="rn" style="left:775.1px">5</span><i class="rt" style="left:792.4px"></i><i class="rd" style="left:783.5px"></i><i class="rd" style="left:801.2px"></i><span class="rn" style="left:810.6px">6</span><i class="rt" style="left:827.8px"></i><i class="rd" style="left:818.9px"></i><i class="rd" style="left:836.7px"></i><span class="rn" style="left:846.0px">7</span><i class="rt" style="left:863.2px"></i><i class="rd" style="left:854.4px"></i><i class="rd" style="left:872.1px"></i><span class="rn" style="left:881.4px">8</span><i class="rt" style="left:898.7px"></i><i class="rd" style="left:889.8px"></i><i class="rd" style="left:907.5px"></i><span class="rn" style="left:916.9px">9</span><i class="rt" style="left:934.1px"></i><i class="rd" style="left:925.2px"></i><i class="rd" style="left:942.9px"></i><span class="rn" style="left:952.3px">10</span><i class="rt" style="left:969.5px"></i><i class="rd" style="left:960.7px"></i><i class="rd" style="left:978.4px"></i><span class="rn" style="left:987.7px">11</span><i class="rt" style="left:1004.9px"></i><i class="rd" style="left:996.1px"></i><i class="rd" style="left:1013.8px"></i><span class="rn" style="left:1023.2px">12</span><i class="rt" style="left:1040.4px"></i><i class="rd" style="left:1031.5px"></i><i class="rd" style="left:1049.2px"></i><span class="rn" style="left:1058.6px">13</span><i class="rt" style="left:1075.8px"></i><i class="rd" style="left:1066.9px"></i><i class="rd" style="left:1084.7px"></i><span class="rn" style="left:1094.0px">14</span></div>
  <div id="slide"></div>
  <div id="vruler"><i class="vd" style="top:8.3px"></i><span class="vn" style="top:17.6px">9</span><i class="vt" style="top:34.8px"></i><i class="vd" style="top:26.0px"></i><i class="vd" style="top:43.7px"></i><span class="vn" style="top:53.1px">8</span><i class="vt" style="top:70.3px"></i><i class="vd" style="top:61.4px"></i><i class="vd" style="top:79.1px"></i><span class="vn" style="top:88.5px">7</span><i class="vt" style="top:105.7px"></i><i class="vd" style="top:96.8px"></i><i class="vd" style="top:114.6px"></i><span class="vn" style="top:123.9px">6</span><i class="vt" style="top:141.1px"></i><i class="vd" style="top:132.3px"></i><i class="vd" style="top:150.0px"></i><span class="vn" style="top:159.4px">5</span><i class="vt" style="top:176.6px"></i><i class="vd" style="top:167.7px"></i><i class="vd" style="top:185.4px"></i><span class="vn" style="top:194.8px">4</span><i class="vt" style="top:212.0px"></i><i class="vd" style="top:203.1px"></i><i class="vd" style="top:220.9px"></i><span class="vn" style="top:230.2px">3</span><i class="vt" style="top:247.4px"></i><i class="vd" style="top:238.6px"></i><i class="vd" style="top:256.3px"></i><span class="vn" style="top:265.6px">2</span><i class="vt" style="top:282.9px"></i><i class="vd" style="top:274.0px"></i><i class="vd" style="top:291.7px"></i><span class="vn" style="top:301.1px">1</span><i class="vt" style="top:318.3px"></i><i class="vd" style="top:309.4px"></i><i class="vd" style="top:327.1px"></i><span class="vn" style="top:336.5px">0</span><i class="vt" style="top:353.7px"></i><i class="vd" style="top:344.9px"></i><i class="vd" style="top:362.6px"></i><span class="vn" style="top:371.9px">1</span><i class="vt" style="top:389.1px"></i><i class="vd" style="top:380.3px"></i><i class="vd" style="top:398.0px"></i><span class="vn" style="top:407.4px">2</span><i class="vt" style="top:424.6px"></i><i class="vd" style="top:415.7px"></i><i class="vd" style="top:433.4px"></i><span class="vn" style="top:442.8px">3</span><i class="vt" style="top:460.0px"></i><i class="vd" style="top:451.1px"></i><i class="vd" style="top:468.9px"></i><span class="vn" style="top:478.2px">4</span><i class="vt" style="top:495.4px"></i><i class="vd" style="top:486.6px"></i><i class="vd" style="top:504.3px"></i><span class="vn" style="top:513.6px">5</span><i class="vt" style="top:530.9px"></i><i class="vd" style="top:522.0px"></i><i class="vd" style="top:539.7px"></i><span class="vn" style="top:549.1px">6</span><i class="vt" style="top:566.3px"></i><i class="vd" style="top:557.4px"></i><i class="vd" style="top:575.2px"></i><span class="vn" style="top:584.5px">7</span><i class="vt" style="top:601.7px"></i><i class="vd" style="top:592.9px"></i><i class="vd" style="top:610.6px"></i><span class="vn" style="top:619.9px">8</span><i class="vt" style="top:637.2px"></i><i class="vd" style="top:628.3px"></i><i class="vd" style="top:646.0px"></i><span class="vn" style="top:655.4px">9</span><i class="vt" style="top:672.6px"></i><i class="vd" style="top:663.7px"></i></div>
<div class="abs" id="mon" style="left:396.5px;top:130px;width:602px;height:365px;border-radius:19px 19px 0 0;background:linear-gradient(to bottom,rgba(0,0,0,0) 0%,rgba(0,0,0,0.55) 45%,#000 82%),linear-gradient(to right,#000 38%,#4b4b4b 70%)"></div>
<div class="abs" style="left:397px;top:495px;width:601px;height:54px;border-radius:0 0 18px 18px;background:linear-gradient(to right,#c7c7c7 0%,#cdcdcd 40%,#dedede 100%)"></div>
<div class="abs" style="left:417px;top:153px;width:561px;height:319px;background:linear-gradient(to right,#f6f6f6,#fafafa)"></div>

<div class="abs" id="pic" style="left:502px;top:38px;width:300px;height:676px;background:#fff;box-shadow:inset 0 0 0 1px #a8a8a8">
<div class="abs" style="left:0;top:0;width:300px;height:338px"><svg class="abs" style="left:0;top:0" width="300" height="338" viewBox="0 0 300 338">
<defs>
  <clipPath id="p_c1"><rect x="0" y="0" width="147" height="165"/></clipPath>
  <clipPath id="p_c2"><rect x="0" y="0" width="148" height="165"/></clipPath>
  <clipPath id="p_c3"><rect x="0" y="0" width="148" height="162"/></clipPath>
  <clipPath id="p_c4"><rect x="0" y="0" width="148" height="162"/></clipPath>
  <filter id="p_b1" x="-20%" y="-20%" width="140%" height="140%"><feGaussianBlur stdDeviation="1"/></filter>
  <filter id="p_b2" x="-20%" y="-20%" width="140%" height="140%"><feGaussianBlur stdDeviation="2.2"/></filter>
  <filter id="p_b4" x="-30%" y="-30%" width="160%" height="160%"><feGaussianBlur stdDeviation="4.5"/></filter>
  <filter id="p_b8" x="-40%" y="-40%" width="180%" height="180%"><feGaussianBlur stdDeviation="8"/></filter>
  <filter id="p_rough" x="-10%" y="-10%" width="120%" height="120%"><feTurbulence type="fractalNoise" baseFrequency="0.18" numOctaves="3" seed="3" result="n"/><feDisplacementMap in="SourceGraphic" in2="n" scale="7" xChannelSelector="R" yChannelSelector="G"/></filter>
  <filter id="p_rough2" x="-10%" y="-10%" width="120%" height="120%"><feTurbulence type="fractalNoise" baseFrequency="0.09" numOctaves="3" seed="8" result="n"/><feDisplacementMap in="SourceGraphic" in2="n" scale="5" xChannelSelector="R" yChannelSelector="G"/></filter>
  <filter id="p_tex" x="0" y="0" width="100%" height="100%"><feTurbulence type="fractalNoise" baseFrequency="0.35" numOctaves="3" seed="5" result="n"/><feColorMatrix in="n" type="matrix" values="0 0 0 0 0  0 0 0 0 0  0 0 0 0 0  1.6 0 0 0 -0.55" result="a"/><feComposite in="SourceGraphic" in2="a" operator="in"/></filter>
  <filter id="p_tex2" x="0" y="0" width="100%" height="100%"><feTurbulence type="fractalNoise" baseFrequency="0.12 0.2" numOctaves="4" seed="11" result="n"/><feColorMatrix in="n" type="matrix" values="0 0 0 0 0  0 0 0 0 0  0 0 0 0 0  2.2 0 0 0 -0.85" result="a"/><feComposite in="SourceGraphic" in2="a" operator="in"/></filter>
  <clipPath id="p_treeclip"><path d="M0 12 Q12 6 20 16 Q33 20 39 35 Q52 45 49 62 Q47 74 38 83 Q41 100 34 117 L35 138 H0Z"/></clipPath>
  <clipPath id="p_mt3clip"><path d="M0 86 L22 78 L38 73 L48 76 L55 80 L70 76 L85 80 L104 92 L126 102 L148 108 V162 H0Z"/></clipPath>
  <clipPath id="p_tlclip"><path d="M0 112 L14 108 L40 106 L60 106 L94 106 L100 112 L112 108 L148 106 V120 L100 117 L60 115 L24 120 L0 134Z"/></clipPath>
  <!-- P1 -->
  <linearGradient id="p_sky1" x1="0" y1="0" x2="0" y2="1"><stop offset="0" stop-color="#fff8ea"/><stop offset="0.45" stop-color="#ffe6b4"/><stop offset="0.8" stop-color="#ffb648"/><stop offset="1" stop-color="#e88a1e"/></linearGradient>
  <linearGradient id="p_roadL" x1="0" y1="0" x2="0" y2="1"><stop offset="0" stop-color="#0e1c22"/><stop offset="0.3" stop-color="#2a4252"/><stop offset="0.65" stop-color="#203442"/><stop offset="1" stop-color="#0d181e"/></linearGradient>
  <linearGradient id="p_roadR" x1="0" y1="0" x2="0" y2="1"><stop offset="0" stop-color="#76501e"/><stop offset="0.3" stop-color="#503c22"/><stop offset="1" stop-color="#2a2016"/></linearGradient>
  <linearGradient id="p_bR" x1="0" y1="0" x2="1" y2="0"><stop offset="0" stop-color="#6a3c12"/><stop offset="0.18" stop-color="#3e2610"/><stop offset="0.5" stop-color="#2c1c10"/><stop offset="1" stop-color="#17110c"/></linearGradient>
  <radialGradient id="p_sun" cx="0.5" cy="0.5" r="0.5"><stop offset="0" stop-color="#fff6c8"/><stop offset="0.35" stop-color="#ffc24e" stop-opacity="0.95"/><stop offset="1" stop-color="#ff9a20" stop-opacity="0"/></radialGradient>
  <!-- P2 -->
  <linearGradient id="p_sky2" x1="0" y1="0" x2="0" y2="1"><stop offset="0" stop-color="#1e3448"/><stop offset="0.35" stop-color="#3a546e"/><stop offset="0.75" stop-color="#74889c"/><stop offset="1" stop-color="#9aa0a0"/></linearGradient>
  <linearGradient id="p_rock" x1="0" y1="0" x2="0" y2="1"><stop offset="0" stop-color="#d2731e"/><stop offset="0.5" stop-color="#a85a22"/><stop offset="1" stop-color="#6e4a34"/></linearGradient>
  <linearGradient id="p_scree" x1="0" y1="0" x2="0" y2="1"><stop offset="0" stop-color="#9a7660"/><stop offset="0.5" stop-color="#b4a094"/><stop offset="1" stop-color="#9a9478"/></linearGradient>
  <linearGradient id="p_mead" x1="0" y1="0" x2="0.4" y2="1"><stop offset="0" stop-color="#3e9018"/><stop offset="0.4" stop-color="#56b222"/><stop offset="1" stop-color="#338014"/></linearGradient>
  <clipPath id="p_rockclip"><path d="M0 80.5 L10.9 78.7 L16.2 74.3 L21.6 71.6 L28.7 67.1 L34.1 69.8 L39.4 68 L44.8 60.9 L53.7 53.7 L64.4 44.8 L71.6 36.8 L76.9 33.7 L82.3 35.9 L85.9 44.8 L90.3 46.6 L96.6 43 L107.3 39.8 L114.4 39.1 L118 43 L125.1 44.8 L132.3 55.5 L135.9 60.9 L143 59.1 L148 61.8 V92 L130 84 L112 88 L96 84 L80 90 L64 82 L48 88 L34 84 L12 86 L0 92Z"/></clipPath>
  <!-- P3 -->
  <linearGradient id="p_sky3" x1="0" y1="0" x2="0" y2="1"><stop offset="0" stop-color="#8c8c90"/><stop offset="0.45" stop-color="#d8bca0"/><stop offset="1" stop-color="#f4dcbc"/></linearGradient>
  <linearGradient id="p_mt3" x1="0" y1="0" x2="0" y2="1"><stop offset="0" stop-color="#182e36"/><stop offset="0.4" stop-color="#264e56"/><stop offset="0.8" stop-color="#24483a"/><stop offset="1" stop-color="#1c3816"/></linearGradient>
  <linearGradient id="p_bigmt" x1="1" y1="0" x2="0.3" y2="1"><stop offset="0" stop-color="#39444a"/><stop offset="0.45" stop-color="#46585f"/><stop offset="1" stop-color="#5e7a82"/></linearGradient>
  <!-- P4 -->
  <clipPath id="p_tclip"><path d="M119 17 L116 20.5 L114.4 25 L110.8 26.8 L109 30.4 L105.5 34 L104.6 39.3 L100.1 40.2 L99.8 47.4 L94.8 50 L95.7 57.2 L92.1 62.5 L89.4 63.4 L87.6 58 L85 56.3 L82.3 59.8 L83.2 64.3 L78.7 66 L80.5 72.4 L74.3 74 L73.4 77.7 L68 79.5 L64.4 81.3 L60 82.2 L60.9 92 L57.3 106 L52 117 L46.6 128 L43 135 V152 L112 148 L113 135 L113 120 L113.6 46 Z"/></clipPath>

  <linearGradient id="p_sky4" x1="0" y1="0" x2="0" y2="1"><stop offset="0" stop-color="#6ea4e2"/><stop offset="0.5" stop-color="#8cbaea"/><stop offset="0.85" stop-color="#c4dcf2"/><stop offset="1" stop-color="#d8e8f4"/></linearGradient>
  <linearGradient id="p_mt4" x1="0" y1="0" x2="0" y2="1"><stop offset="0" stop-color="#4272a0"/><stop offset="0.6" stop-color="#6a9cc0"/><stop offset="1" stop-color="#a8c8d8"/></linearGradient>
  <linearGradient id="p_tmp" x1="0" y1="0" x2="0" y2="1"><stop offset="0" stop-color="#28332e"/><stop offset="0.5" stop-color="#1e2a21"/><stop offset="1" stop-color="#182016"/></linearGradient>
</defs>

<!-- ===== P1 street ===== -->
<g transform="translate(3,3)" clip-path="url(#p_c1)">
  <rect width="147" height="165" fill="#0b171c"/>
  <!-- sky gap -->
  <path d="M62 0 H88 L86 60 L84 95 H66 L64 50Z" fill="url(#p_sky1)"/>
  <ellipse cx="69" cy="50" rx="20" ry="26" fill="url(#p_sun)"/>
  <!-- left buildings / trees -->
  <path d="M0 0 H63 L64 60 L65 95 H0Z" fill="#0a1519"/>
  <path d="M43 0 H63 L64 80 H44Z" fill="#11282f"/>
  <path d="M5 10 Q25 30 20 70 Q40 40 55 20 Q45 60 52 85 L10 88Z" fill="#10242a" filter="url(#p_b2)"/>
  <path d="M0 20 Q15 50 8 85 M20 0 Q28 40 22 90 M35 10 Q30 50 40 84" stroke="#060c0e" stroke-width="2.4" fill="none"/>
  <rect x="60" y="44" width="5" height="40" fill="#c87a1c" opacity="0.65" filter="url(#p_b1)"/>
  <!-- branches over sky -->
  <path d="M60 12 Q75 8 92 14 Q110 8 140 10 M66 22 Q72 28 78 20 M70 4 Q74 14 70 30" stroke="#1a1208" stroke-width="1.2" fill="none"/>
  <!-- distant tower -->
  <rect x="77" y="49" width="7.5" height="32" fill="#7c4a12"/>
  <rect x="84.5" y="55" width="4" height="30" fill="#d88a1e"/>
  <!-- right buildings -->
  <path d="M87 0 H147 V98 H88Z" fill="url(#p_bR)"/>
  <path d="M87 0 H94 L95 90 H88Z" fill="#2a1c10"/>
  <path d="M94 14 L99 11 V86 H95Z" fill="#b46a1c"/><path d="M99 11 L103 8 V88 H99Z" fill="#4a2c10"/>
  <path d="M103 8 L131 0 H147 V95 H103Z" fill="#241810"/>
  <g stroke="#5a3412" stroke-width="1.3" opacity="0.8"><path d="M104 20 L130 14 M104 28 L130 23 M104 36 L130 32 M104 44 L130 41 M104 52 L130 50 M104 60 L130 59 M104 68 L130 68"/></g>
  <path d="M131 0 H147 V98 H131Z" fill="#1a130d"/>
  <g fill="#e89a3a"><rect x="134" y="36" width="2" height="6"/><rect x="139" y="36" width="2" height="6"/><rect x="144" y="36" width="2" height="6"/><rect x="134" y="48" width="2" height="5"/><rect x="139" y="48" width="2" height="5"/><rect x="113" y="44" width="2" height="2.5"/><rect x="119" y="46" width="2" height="2.5"/></g>
  <g fill="#ffc060" filter="url(#p_b1)"><circle cx="121" cy="63" r="2.2"/><circle cx="105" cy="69" r="1.8"/><circle cx="113" cy="67" r="1.4"/><circle cx="97" cy="22" r="1.6"/><circle cx="141" cy="76" r="1.8"/><circle cx="129" cy="74" r="1.3"/></g>
  <!-- road -->
  <path d="M0 96 L70 88 V165 H0Z" fill="url(#p_roadL)"/>
  <path d="M70 88 L147 100 V165 H70Z" fill="url(#p_roadR)"/>
  <path d="M92 91 L147 99 V107 L94 95Z" fill="#b87422" opacity="0.85" filter="url(#p_b1)"/>
  <path d="M4 112 Q30 104 64 100 L62 118 Q34 126 6 136Z" fill="#5a7888" opacity="0.45" filter="url(#p_b2)"/><path d="M0 140 Q30 132 60 134 L56 165 H0Z" fill="#0a1318" opacity="0.55" filter="url(#p_b4)"/>
  <path d="M70 100 L100 165 H50 L62 100Z" fill="#1a1a14" opacity="0.55" filter="url(#p_b2)"/>
  <path d="M88 108 L118 165" stroke="#2a1c0e" stroke-width="1.2" fill="none"/>
  <rect x="0" y="92" width="147" height="73" fill="#0a0e10" opacity="0.45" filter="url(#p_tex)"/>
  <rect x="0" y="96" width="70" height="69" fill="#7a98a8" opacity="0.3" filter="url(#p_tex2)"/>
  <rect x="0" y="0" width="62" height="90" fill="#1e4048" opacity="0.5" filter="url(#p_tex2)"/>
  <!-- cars -->
  <path d="M33 84 Q36 80 46 80 Q53 81 55 88 V96 H34Z" fill="#070b0d"/>
  <rect x="48" y="84" width="6" height="3" fill="#6a6a60" opacity="0.7"/>
  <path d="M0 96 Q5 96 7 104 V118 H0Z" fill="#070b0d"/>
  <path d="M96 90 H124 V96 H96Z" fill="#150f0a"/>
  <rect x="108" y="90" width="12" height="2.2" fill="#e8d8a0" opacity="0.8"/>
  <!-- cone -->
  <path d="M15 88 L18.5 100 H11.5Z" fill="#f0603a"/>
  <!-- sidewalk left -->
  <path d="M0 96 L33 92 V97 L0 104Z" fill="#162a30"/>
  <!-- person -->
  <path d="M72.7 64.2 Q79.6 66 79.8 74 Q80 79 72.7 79.5 Q65.4 79 65.6 74 Q65.8 66 72.7 64.2Z" fill="#07090a"/>
  <path d="M66 75 Q60 80 59.5 92 Q58.5 104 62 108 L66 110 L65.5 125 Q67 150 69 164 H75 L74.5 128 H76 L77 164 H83 Q85 146 85.5 124 L86 110 L90 107 Q92.5 100 91 90 Q89.5 80 80 76Z" fill="#07090a"/>
  <rect x="69" y="157" width="5.5" height="3.5" fill="#8a3a34"/><rect x="77.5" y="156" width="5" height="3" fill="#5a5a60"/>
</g>

<!-- ===== P2 mountain ===== -->
<g transform="translate(150,3)" clip-path="url(#p_c2)">
  <rect width="148" height="165" fill="url(#p_sky2)"/>
  <ellipse cx="34" cy="48" rx="40" ry="20" fill="#94a4b4" opacity="0.95" filter="url(#p_b8)"/>
  <ellipse cx="60" cy="30" rx="38" ry="9" fill="#6f8498" opacity="0.7" filter="url(#p_b4)"/>
  <ellipse cx="20" cy="8" rx="40" ry="12" fill="#41617e" opacity="0.8" filter="url(#p_b8)"/>
  <ellipse cx="110" cy="28" rx="30" ry="7" fill="#4c6278" opacity="0.8" filter="url(#p_b4)"/>
  <ellipse cx="130" cy="50" rx="26" ry="12" fill="#5f7890" opacity="0.7" filter="url(#p_b4)"/>
  <ellipse cx="15" cy="74" rx="26" ry="6" fill="#b8b4a8" opacity="0.8" filter="url(#p_b4)"/>
  <!-- rock -->
  <path d="M0 80.5 L10.9 78.7 L16.2 74.3 L21.6 71.6 L28.7 67.1 L34.1 69.8 L39.4 68 L44.8 60.9 L53.7 53.7 L64.4 44.8 L71.6 36.8 L76.9 33.7 L82.3 35.9 L85.9 44.8 L90.3 46.6 L96.6 43 L107.3 39.8 L114.4 39.1 L118 43 L125.1 44.8 L132.3 55.5 L135.9 60.9 L143 59.1 L148 61.8 V112 H0Z" fill="url(#p_rock)"/>
  <!-- rock shadows -->
  <path d="M76.9 33.7 L82.3 35.9 L85.9 44.8 L88 60 L90 84 L80 88 L84 60 L80 46Z" fill="#3c2a22" opacity="0.85"/>
  <path d="M53.7 53.7 L64 46 L60 58 L52 70 L44 84 L40 78 L46 64Z" fill="#4a3024" opacity="0.8"/>
  <path d="M118 43 L125.1 44.8 L132.3 55.5 L135.9 60.9 L143 59.1 L148 61.8 V90 L136 82 L128 64Z" fill="#4a4234" opacity="0.85"/>
  <path d="M96 56 L104 50 L108 66 L104 82 L96 78Z" fill="#5a3824" opacity="0.7" filter="url(#p_b1)"/>
  <path d="M62 60 L72 48 L76 62 L70 74 L58 78Z" fill="#e0842a" opacity="0.75" filter="url(#p_b1)"/>
  <path d="M92 50 L100 44 L112 42 L110 52 L100 56Z" fill="#d27a2a" opacity="0.7" filter="url(#p_b1)"/>
  <path d="M10 79 L22 72 L30 68 L36 72 L34 82 L12 86Z" fill="#e8922a" opacity="0.9"/>
  <g fill="#3e2a20" opacity="0.6" filter="url(#p_b1)"><path d="M98 44 L101 60 L99 78 L96 62Z"/><path d="M108 42 L112 58 L110 76 L106 60Z"/><path d="M120 46 L124 62 L122 80 L118 64Z"/><path d="M66 50 L68 64 L64 80 L62 66Z"/><path d="M48 62 L52 70 L46 84 L44 74Z"/><path d="M128 54 L134 66 L134 82 L128 70Z"/></g>
  <path d="M100 46 L118 42 L130 56 L140 62 L148 64 V86 L120 84 L100 80Z" fill="#5a3a2a" opacity="0.45"/>
  <rect x="0" y="30" width="148" height="64" fill="#2a1a14" opacity="0.7" filter="url(#p_tex2)" clip-path="url(#p_rockclip)"/>
  <!-- scree -->
  <path d="M0 92 L12 86 L34 84 L48 88 L64 82 L80 90 L96 84 L112 88 L130 84 L148 92 V112 H0Z" fill="url(#p_scree)"/>
  <path d="M44 92 L62 78 L70 72 L80 90 L94 110 H36Z" fill="#c0a89c" opacity="0.9" filter="url(#p_b1)"/>
  <path d="M108 90 L124 80 L134 78 L148 90 V106 H114Z" fill="#c4aa9a" opacity="0.9" filter="url(#p_b1)"/>
  <path d="M0 90 L20 88 L30 100 L6 112 H0Z" fill="#8a7a50" opacity="0.7" filter="url(#p_b1)"/>
  <path d="M92 84 L98 100 L104 108 L118 114 L100 114 L94 108Z" fill="#d0c4b8" opacity="0.9"/>
  <!-- tree line -->
  <path d="M0 112 L14 108 L40 106 L60 106 L94 106 L100 112 L112 108 L148 106 V120 L100 117 L60 115 L24 120 L0 134Z" fill="#17320e"/><path d="M0 100 L14 96 L30 104 L10 116 L0 120Z" fill="#5a6a3a" opacity="0.8" filter="url(#p_b1)"/>
  <!-- meadow -->
  <path d="M0 132 L22 122 L60 114 L100 116 L148 120 V165 H0Z" fill="url(#p_mead)"/>
  <path d="M100 130 Q120 128 148 140 V165 H120 Q128 150 100 138Z" fill="#1f5a0e" opacity="0.75" filter="url(#p_b2)"/>
  <path d="M0 130 L24 122 L30 132 L10 142 L0 146Z" fill="#1c4a10" opacity="0.8" filter="url(#p_b1)"/>
  <path d="M28 150 Q40 140 50 165 H26Z" fill="#1c4c10" opacity="0.8" filter="url(#p_b1)"/>
  <path d="M72 150 Q84 156 90 165 H70Z" fill="#1f5a0e" opacity="0.7" filter="url(#p_b1)"/>
  <path d="M0 138 L22 136 L26 150 L24 165 H0Z" fill="#4a2c18"/>
  <g clip-path="url(#p_tlclip)"><rect x="0" y="100" width="148" height="36" fill="#0c1c08" opacity="0.6" filter="url(#p_tex)"/></g>
  <rect x="0" y="118" width="148" height="47" fill="#1c4c0c" opacity="0.35" filter="url(#p_tex2)"/>
  <path d="M52 165 Q58 156 66 150 Q72 142 76 134 Q84 130 96 130 M76 134 Q80 128 74 125" stroke="#dadca8" stroke-width="1.3" fill="none"/>
</g>

<!-- ===== P3 clouds & hills ===== -->
<g transform="translate(2,172)" clip-path="url(#p_c3)">
  <rect width="148" height="162" fill="url(#p_sky3)"/>
  <ellipse cx="10" cy="30" rx="22" ry="34" fill="#ecc49c" filter="url(#p_b8)"/>
  <ellipse cx="72" cy="50" rx="34" ry="18" fill="#fae6c8" filter="url(#p_b8)"/>
  <ellipse cx="66" cy="14" rx="44" ry="17" fill="#6c6a6c" filter="url(#p_b8)"/>
  <ellipse cx="128" cy="8" rx="30" ry="10" fill="#9ca8b4" filter="url(#p_b4)"/>
  <ellipse cx="140" cy="20" rx="14" ry="8" fill="#eaddcc" filter="url(#p_b4)"/>
  <!-- dark cloud column -->
  <path d="M24 30 Q36 24 44 30 Q42 40 30 44 Q26 54 28 70 L10 74 Q6 60 14 52 Q8 46 16 40 Q18 32 24 30Z" fill="#54443a" filter="url(#p_b2)"/>
  <path d="M86 40 Q106 26 134 28 Q126 46 100 52 Q90 50 86 40Z" fill="#5e5048" filter="url(#p_b4)"/>
  <ellipse cx="6" cy="68" rx="8" ry="7" fill="#8a6850" filter="url(#p_b2)"/>
  <!-- big right mountain -->
  <path d="M148 36 L130 46 L110 58 L90 68 L68 78 V120 H148Z" fill="url(#p_bigmt)"/>
  <!-- mid mountains -->
  <path d="M0 86 L22 78 L38 73 L48 76 L55 80 L70 76 L85 80 L104 92 L126 102 L148 108 V162 H0Z" fill="url(#p_mt3)"/>
  <path d="M0 82 L18 76 L38 73 L30 84 L12 92 L0 96Z" fill="#3a5a62" opacity="0.8" filter="url(#p_b1)"/>
  <path d="M0 86 L22 78 L38 73 L48 76 L55 80 L70 76 L85 80 L104 92 L126 102 L148 108 V116 L110 104 L80 92 L58 90 L40 84 L0 100Z" fill="#10222a" opacity="0.55" filter="url(#p_b2)"/>
  <path d="M148 36 L130 46 L110 58 L90 68 L148 80Z" fill="#2c363c" opacity="0.6" filter="url(#p_b2)"/>
  <!-- haze / light rays -->
  <path d="M20 60 L148 20 V120 L100 110Z" fill="#c8d4d8" opacity="0.14" filter="url(#p_b4)"/>
  <path d="M116 84 L148 74 V128 L120 116Z" fill="#8aa4ac" opacity="0.5" filter="url(#p_b4)"/>
  <ellipse cx="40" cy="112" rx="40" ry="14" fill="#2c686e" opacity="0.5" filter="url(#p_b4)"/>
  <!-- forest -->
  <path d="M0 146 Q30 136 60 146 Q100 138 148 140 V164 H0Z" fill="#244414" filter="url(#p_b1)"/>
  <ellipse cx="74" cy="151" rx="34" ry="6" fill="#44782a" opacity="0.8" filter="url(#p_b2)"/>
  <ellipse cx="125" cy="148" rx="22" ry="5" fill="#3a6a1e" opacity="0.85" filter="url(#p_b2)"/>
  <g clip-path="url(#p_mt3clip)"><rect x="0" y="70" width="148" height="92" fill="#0c1c1c" opacity="0.4" filter="url(#p_tex2)"/></g>
  <rect x="0" y="138" width="148" height="24" fill="#0c1c08" opacity="0.55" filter="url(#p_tex)"/>
  <!-- roads -->
  <path d="M22 95 Q34 104 42 108 Q70 112 96 113 Q112 110 128 106 M24 112 Q36 122 50 124 Q70 134 80 140 M0 128 Q12 134 20 134 Q28 140 34 140" stroke="#b4d0d0" stroke-width="0.9" fill="none" opacity="0.85"/>
</g>

<!-- ===== P4 temple ===== -->
<g transform="translate(150,172)" clip-path="url(#p_c4)">
  <rect width="148" height="162" fill="url(#p_sky4)"/>
  <ellipse cx="60" cy="30" rx="40" ry="10" fill="#d4e2f2" opacity="0.75" filter="url(#p_b4)"/>
  <ellipse cx="125" cy="55" rx="30" ry="12" fill="#dce8f4" opacity="0.8" filter="url(#p_b4)"/>
  <ellipse cx="110" cy="12" rx="36" ry="6" fill="#c4d8ee" opacity="0.7" filter="url(#p_b4)"/>
  <ellipse cx="90" cy="85" rx="50" ry="10" fill="#e4eef6" opacity="0.8" filter="url(#p_b4)"/>
  <!-- far mountain -->
  <path d="M100 92 L118 88 L130 92 L148 94 V150 H100Z" fill="url(#p_mt4)"/>
  <!-- left big tree -->
  <g filter="url(#p_rough)">
  <path d="M-4 8 Q12 2 22 14 Q36 18 42 34 Q56 44 52 62 Q50 76 40 84 Q44 100 36 118 L38 140 H-4Z" fill="#274818"/>
  <path d="M2 18 Q16 12 26 26 Q38 36 34 52 Q18 62 4 54Z" fill="#4a8226" opacity="0.85"/>
  <path d="M30 40 Q46 42 48 60 Q42 72 30 70Z" fill="#3c6e20" opacity="0.85"/>
  <path d="M6 70 Q20 62 32 74 Q30 88 14 92Z" fill="#427822" opacity="0.8"/>
  <path d="M-4 92 Q16 88 30 102 Q28 124 8 130 H-4Z" fill="#1b3412"/>
  <path d="M12 118 Q24 114 34 124 L34 138 H10Z" fill="#467c20" opacity="0.7"/>
  </g>
  <g clip-path="url(#p_treeclip)"><rect x="0" y="6" width="56" height="134" fill="#0e2008" opacity="0.55" filter="url(#p_tex)"/></g>
  <g clip-path="url(#p_treeclip)"><rect x="0" y="6" width="56" height="134" fill="#7ab03a" opacity="0.35" filter="url(#p_tex2)"/></g>
  <!-- mid small tree -->
  <path d="M34 96 Q40 88 46 92 L46 104 H36Z" fill="#5a86a6" opacity="0.8" filter="url(#p_b1)"/><path d="M30 104 Q40 96 50 100 Q56 88 64 90 L66 140 H30Z" fill="#2c4a1c" filter="url(#p_b1)"/><path d="M42 96 Q52 86 62 92 Q64 106 58 120 H44Z" fill="#5e8a2c" opacity="0.9" filter="url(#p_b1)"/><path d="M32 110 Q40 104 46 112 L46 130 H32Z" fill="#4a7a26" opacity="0.8" filter="url(#p_b1)"/>
  <!-- temple -->
  <path d="M119 17 L116 20.5 L114.4 25 L110.8 26.8 L109 30.4 L105.5 34 L104.6 39.3 L100.1 40.2 L99.8 47.4 L94.8 50 L95.7 57.2 L92.1 62.5 L89.4 63.4 L87.6 58 L85 56.3 L82.3 59.8 L83.2 64.3 L78.7 66 L80.5 72.4 L74.3 74 L73.4 77.7 L68 79.5 L64.4 81.3 L60 82.2 L60.9 92 L57.3 106 L52 117 L46.6 128 L43 135 V152 L116.2 148 L118 135 L116.2 120 L117 81 Z" fill="url(#p_tmp)"/>
  <path d="M114.6 52 L117.4 46 L117.2 122 L114.4 122Z" fill="#6f6e5a"/>
  <path d="M104 127 Q110 122 116 125 L117 146 H106Z" fill="#74684e"/>
  <path d="M70 90 H100 M66 104 H104 M60 118 H102 M50 132 H104" stroke="#1a2418" stroke-width="1.6" opacity="0.7" fill="none"/>
  <path d="M86 64 L100 50 L104 64 L100 120 H84Z" fill="#364434" opacity="0.45" filter="url(#p_b1)"/>
  <rect x="40" y="16" width="80" height="136" fill="#4c5c4a" opacity="0.38" filter="url(#p_tex)" clip-path="url(#p_tclip)"/>
  <path d="M46 128 Q50 104 60 96 Q70 92 72 104 Q66 120 64 138 H46Z" fill="#3c6420" opacity="0.9" filter="url(#p_rough2)"/>
  <path d="M56 100 Q62 92 68 98 Q68 108 62 114Z" fill="#7aa43a" opacity="0.8" filter="url(#p_b1)"/>
  <!-- hedge -->
  <path d="M0 134 L60 132 L104 136 V150 L0 154Z" fill="#172414"/>
  <!-- right tree -->
  <ellipse cx="143" cy="132" rx="9" ry="13" fill="#3e5e3a" filter="url(#p_b1)"/>
  <path d="M118 128 Q126 124 136 136 V148 H118Z" fill="#9ab8a8" opacity="0.6" filter="url(#p_b2)"/>
  <!-- ground -->
  <path d="M0 152 L80 148 L148 144 V162 H0Z" fill="#55554a"/>
  <path d="M0 152 L70 148 L116 146 L60 156 L0 160Z" fill="#4a9a1c"/>
  <path d="M0 158 L60 156 L40 162 H0Z" fill="#3a7a18"/>
  <path d="M60 158 L148 150 V162 H50Z" fill="#7a7668" opacity="0.7"/>
</g>
</svg>
</div>
<div class="abs" style="left:0;top:336px;width:300px;height:338px"><svg class="abs" style="left:0;top:0" width="300" height="338" viewBox="0 0 300 338">
<defs>
  <clipPath id="q_c1"><rect x="0" y="0" width="147" height="165"/></clipPath>
  <clipPath id="q_c2"><rect x="0" y="0" width="148" height="165"/></clipPath>
  <clipPath id="q_c3"><rect x="0" y="0" width="148" height="162"/></clipPath>
  <clipPath id="q_c4"><rect x="0" y="0" width="148" height="162"/></clipPath>
  <filter id="q_b1" x="-20%" y="-20%" width="140%" height="140%"><feGaussianBlur stdDeviation="1"/></filter>
  <filter id="q_b2" x="-20%" y="-20%" width="140%" height="140%"><feGaussianBlur stdDeviation="2.2"/></filter>
  <filter id="q_b4" x="-30%" y="-30%" width="160%" height="160%"><feGaussianBlur stdDeviation="4.5"/></filter>
  <filter id="q_b8" x="-40%" y="-40%" width="180%" height="180%"><feGaussianBlur stdDeviation="8"/></filter>
  <filter id="q_rough" x="-10%" y="-10%" width="120%" height="120%"><feTurbulence type="fractalNoise" baseFrequency="0.18" numOctaves="3" seed="3" result="n"/><feDisplacementMap in="SourceGraphic" in2="n" scale="7" xChannelSelector="R" yChannelSelector="G"/></filter>
  <filter id="q_rough2" x="-10%" y="-10%" width="120%" height="120%"><feTurbulence type="fractalNoise" baseFrequency="0.09" numOctaves="3" seed="8" result="n"/><feDisplacementMap in="SourceGraphic" in2="n" scale="5" xChannelSelector="R" yChannelSelector="G"/></filter>
  <filter id="q_tex" x="0" y="0" width="100%" height="100%"><feTurbulence type="fractalNoise" baseFrequency="0.35" numOctaves="3" seed="5" result="n"/><feColorMatrix in="n" type="matrix" values="0 0 0 0 0  0 0 0 0 0  0 0 0 0 0  1.6 0 0 0 -0.55" result="a"/><feComposite in="SourceGraphic" in2="a" operator="in"/></filter>
  <filter id="q_tex2" x="0" y="0" width="100%" height="100%"><feTurbulence type="fractalNoise" baseFrequency="0.12 0.2" numOctaves="4" seed="11" result="n"/><feColorMatrix in="n" type="matrix" values="0 0 0 0 0  0 0 0 0 0  0 0 0 0 0  2.2 0 0 0 -0.85" result="a"/><feComposite in="SourceGraphic" in2="a" operator="in"/></filter>
  <clipPath id="q_treeclip"><path d="M0 12 Q12 6 20 16 Q33 20 39 35 Q52 45 49 62 Q47 74 38 83 Q41 100 34 117 L35 138 H0Z"/></clipPath>
  <clipPath id="q_mt3clip"><path d="M0 86 L22 78 L38 73 L48 76 L55 80 L70 76 L85 80 L104 92 L126 102 L148 108 V162 H0Z"/></clipPath>
  <clipPath id="q_tlclip"><path d="M0 112 L14 108 L40 106 L60 106 L94 106 L100 112 L112 108 L148 106 V120 L100 117 L60 115 L24 120 L0 134Z"/></clipPath>
  <!-- P1 -->
  <linearGradient id="q_sky1" x1="0" y1="0" x2="0" y2="1"><stop offset="0" stop-color="#fff8ea"/><stop offset="0.45" stop-color="#ffe6b4"/><stop offset="0.8" stop-color="#ffb648"/><stop offset="1" stop-color="#e88a1e"/></linearGradient>
  <linearGradient id="q_roadL" x1="0" y1="0" x2="0" y2="1"><stop offset="0" stop-color="#0e1c22"/><stop offset="0.3" stop-color="#2a4252"/><stop offset="0.65" stop-color="#203442"/><stop offset="1" stop-color="#0d181e"/></linearGradient>
  <linearGradient id="q_roadR" x1="0" y1="0" x2="0" y2="1"><stop offset="0" stop-color="#76501e"/><stop offset="0.3" stop-color="#503c22"/><stop offset="1" stop-color="#2a2016"/></linearGradient>
  <linearGradient id="q_bR" x1="0" y1="0" x2="1" y2="0"><stop offset="0" stop-color="#6a3c12"/><stop offset="0.18" stop-color="#3e2610"/><stop offset="0.5" stop-color="#2c1c10"/><stop offset="1" stop-color="#17110c"/></linearGradient>
  <radialGradient id="q_sun" cx="0.5" cy="0.5" r="0.5"><stop offset="0" stop-color="#fff6c8"/><stop offset="0.35" stop-color="#ffc24e" stop-opacity="0.95"/><stop offset="1" stop-color="#ff9a20" stop-opacity="0"/></radialGradient>
  <!-- P2 -->
  <linearGradient id="q_sky2" x1="0" y1="0" x2="0" y2="1"><stop offset="0" stop-color="#1e3448"/><stop offset="0.35" stop-color="#3a546e"/><stop offset="0.75" stop-color="#74889c"/><stop offset="1" stop-color="#9aa0a0"/></linearGradient>
  <linearGradient id="q_rock" x1="0" y1="0" x2="0" y2="1"><stop offset="0" stop-color="#d2731e"/><stop offset="0.5" stop-color="#a85a22"/><stop offset="1" stop-color="#6e4a34"/></linearGradient>
  <linearGradient id="q_scree" x1="0" y1="0" x2="0" y2="1"><stop offset="0" stop-color="#9a7660"/><stop offset="0.5" stop-color="#b4a094"/><stop offset="1" stop-color="#9a9478"/></linearGradient>
  <linearGradient id="q_mead" x1="0" y1="0" x2="0.4" y2="1"><stop offset="0" stop-color="#3e9018"/><stop offset="0.4" stop-color="#56b222"/><stop offset="1" stop-color="#338014"/></linearGradient>
  <clipPath id="q_rockclip"><path d="M0 80.5 L10.9 78.7 L16.2 74.3 L21.6 71.6 L28.7 67.1 L34.1 69.8 L39.4 68 L44.8 60.9 L53.7 53.7 L64.4 44.8 L71.6 36.8 L76.9 33.7 L82.3 35.9 L85.9 44.8 L90.3 46.6 L96.6 43 L107.3 39.8 L114.4 39.1 L118 43 L125.1 44.8 L132.3 55.5 L135.9 60.9 L143 59.1 L148 61.8 V92 L130 84 L112 88 L96 84 L80 90 L64 82 L48 88 L34 84 L12 86 L0 92Z"/></clipPath>
  <!-- P3 -->
  <linearGradient id="q_sky3" x1="0" y1="0" x2="0" y2="1"><stop offset="0" stop-color="#8c8c90"/><stop offset="0.45" stop-color="#d8bca0"/><stop offset="1" stop-color="#f4dcbc"/></linearGradient>
  <linearGradient id="q_mt3" x1="0" y1="0" x2="0" y2="1"><stop offset="0" stop-color="#182e36"/><stop offset="0.4" stop-color="#264e56"/><stop offset="0.8" stop-color="#24483a"/><stop offset="1" stop-color="#1c3816"/></linearGradient>
  <linearGradient id="q_bigmt" x1="1" y1="0" x2="0.3" y2="1"><stop offset="0" stop-color="#39444a"/><stop offset="0.45" stop-color="#46585f"/><stop offset="1" stop-color="#5e7a82"/></linearGradient>
  <!-- P4 -->
  <clipPath id="q_tclip"><path d="M119 17 L116 20.5 L114.4 25 L110.8 26.8 L109 30.4 L105.5 34 L104.6 39.3 L100.1 40.2 L99.8 47.4 L94.8 50 L95.7 57.2 L92.1 62.5 L89.4 63.4 L87.6 58 L85 56.3 L82.3 59.8 L83.2 64.3 L78.7 66 L80.5 72.4 L74.3 74 L73.4 77.7 L68 79.5 L64.4 81.3 L60 82.2 L60.9 92 L57.3 106 L52 117 L46.6 128 L43 135 V152 L112 148 L113 135 L113 120 L113.6 46 Z"/></clipPath>

  <linearGradient id="q_sky4" x1="0" y1="0" x2="0" y2="1"><stop offset="0" stop-color="#6ea4e2"/><stop offset="0.5" stop-color="#8cbaea"/><stop offset="0.85" stop-color="#c4dcf2"/><stop offset="1" stop-color="#d8e8f4"/></linearGradient>
  <linearGradient id="q_mt4" x1="0" y1="0" x2="0" y2="1"><stop offset="0" stop-color="#4272a0"/><stop offset="0.6" stop-color="#6a9cc0"/><stop offset="1" stop-color="#a8c8d8"/></linearGradient>
  <linearGradient id="q_tmp" x1="0" y1="0" x2="0" y2="1"><stop offset="0" stop-color="#28332e"/><stop offset="0.5" stop-color="#1e2a21"/><stop offset="1" stop-color="#182016"/></linearGradient>
</defs>

<!-- ===== P1 street ===== -->
<g transform="translate(3,3)" clip-path="url(#q_c1)">
  <rect width="147" height="165" fill="#0b171c"/>
  <!-- sky gap -->
  <path d="M62 0 H88 L86 60 L84 95 H66 L64 50Z" fill="url(#q_sky1)"/>
  <ellipse cx="69" cy="50" rx="20" ry="26" fill="url(#q_sun)"/>
  <!-- left buildings / trees -->
  <path d="M0 0 H63 L64 60 L65 95 H0Z" fill="#0a1519"/>
  <path d="M43 0 H63 L64 80 H44Z" fill="#11282f"/>
  <path d="M5 10 Q25 30 20 70 Q40 40 55 20 Q45 60 52 85 L10 88Z" fill="#10242a" filter="url(#q_b2)"/>
  <path d="M0 20 Q15 50 8 85 M20 0 Q28 40 22 90 M35 10 Q30 50 40 84" stroke="#060c0e" stroke-width="2.4" fill="none"/>
  <rect x="60" y="44" width="5" height="40" fill="#c87a1c" opacity="0.65" filter="url(#q_b1)"/>
  <!-- branches over sky -->
  <path d="M60 12 Q75 8 92 14 Q110 8 140 10 M66 22 Q72 28 78 20 M70 4 Q74 14 70 30" stroke="#1a1208" stroke-width="1.2" fill="none"/>
  <!-- distant tower -->
  <rect x="77" y="49" width="7.5" height="32" fill="#7c4a12"/>
  <rect x="84.5" y="55" width="4" height="30" fill="#d88a1e"/>
  <!-- right buildings -->
  <path d="M87 0 H147 V98 H88Z" fill="url(#q_bR)"/>
  <path d="M87 0 H94 L95 90 H88Z" fill="#2a1c10"/>
  <path d="M94 14 L99 11 V86 H95Z" fill="#b46a1c"/><path d="M99 11 L103 8 V88 H99Z" fill="#4a2c10"/>
  <path d="M103 8 L131 0 H147 V95 H103Z" fill="#241810"/>
  <g stroke="#5a3412" stroke-width="1.3" opacity="0.8"><path d="M104 20 L130 14 M104 28 L130 23 M104 36 L130 32 M104 44 L130 41 M104 52 L130 50 M104 60 L130 59 M104 68 L130 68"/></g>
  <path d="M131 0 H147 V98 H131Z" fill="#1a130d"/>
  <g fill="#e89a3a"><rect x="134" y="36" width="2" height="6"/><rect x="139" y="36" width="2" height="6"/><rect x="144" y="36" width="2" height="6"/><rect x="134" y="48" width="2" height="5"/><rect x="139" y="48" width="2" height="5"/><rect x="113" y="44" width="2" height="2.5"/><rect x="119" y="46" width="2" height="2.5"/></g>
  <g fill="#ffc060" filter="url(#q_b1)"><circle cx="121" cy="63" r="2.2"/><circle cx="105" cy="69" r="1.8"/><circle cx="113" cy="67" r="1.4"/><circle cx="97" cy="22" r="1.6"/><circle cx="141" cy="76" r="1.8"/><circle cx="129" cy="74" r="1.3"/></g>
  <!-- road -->
  <path d="M0 96 L70 88 V165 H0Z" fill="url(#q_roadL)"/>
  <path d="M70 88 L147 100 V165 H70Z" fill="url(#q_roadR)"/>
  <path d="M92 91 L147 99 V107 L94 95Z" fill="#b87422" opacity="0.85" filter="url(#q_b1)"/>
  <path d="M4 112 Q30 104 64 100 L62 118 Q34 126 6 136Z" fill="#5a7888" opacity="0.45" filter="url(#q_b2)"/><path d="M0 140 Q30 132 60 134 L56 165 H0Z" fill="#0a1318" opacity="0.55" filter="url(#q_b4)"/>
  <path d="M70 100 L100 165 H50 L62 100Z" fill="#1a1a14" opacity="0.55" filter="url(#q_b2)"/>
  <path d="M88 108 L118 165" stroke="#2a1c0e" stroke-width="1.2" fill="none"/>
  <rect x="0" y="92" width="147" height="73" fill="#0a0e10" opacity="0.45" filter="url(#q_tex)"/>
  <rect x="0" y="96" width="70" height="69" fill="#7a98a8" opacity="0.3" filter="url(#q_tex2)"/>
  <rect x="0" y="0" width="62" height="90" fill="#1e4048" opacity="0.5" filter="url(#q_tex2)"/>
  <!-- cars -->
  <path d="M33 84 Q36 80 46 80 Q53 81 55 88 V96 H34Z" fill="#070b0d"/>
  <rect x="48" y="84" width="6" height="3" fill="#6a6a60" opacity="0.7"/>
  <path d="M0 96 Q5 96 7 104 V118 H0Z" fill="#070b0d"/>
  <path d="M96 90 H124 V96 H96Z" fill="#150f0a"/>
  <rect x="108" y="90" width="12" height="2.2" fill="#e8d8a0" opacity="0.8"/>
  <!-- cone -->
  <path d="M15 88 L18.5 100 H11.5Z" fill="#f0603a"/>
  <!-- sidewalk left -->
  <path d="M0 96 L33 92 V97 L0 104Z" fill="#162a30"/>
  <!-- person -->
  <path d="M72.7 64.2 Q79.6 66 79.8 74 Q80 79 72.7 79.5 Q65.4 79 65.6 74 Q65.8 66 72.7 64.2Z" fill="#07090a"/>
  <path d="M66 75 Q60 80 59.5 92 Q58.5 104 62 108 L66 110 L65.5 125 Q67 150 69 164 H75 L74.5 128 H76 L77 164 H83 Q85 146 85.5 124 L86 110 L90 107 Q92.5 100 91 90 Q89.5 80 80 76Z" fill="#07090a"/>
  <rect x="69" y="157" width="5.5" height="3.5" fill="#8a3a34"/><rect x="77.5" y="156" width="5" height="3" fill="#5a5a60"/>
</g>

<!-- ===== P2 mountain ===== -->
<g transform="translate(150,3)" clip-path="url(#q_c2)">
  <rect width="148" height="165" fill="url(#q_sky2)"/>
  <ellipse cx="34" cy="48" rx="40" ry="20" fill="#94a4b4" opacity="0.95" filter="url(#q_b8)"/>
  <ellipse cx="60" cy="30" rx="38" ry="9" fill="#6f8498" opacity="0.7" filter="url(#q_b4)"/>
  <ellipse cx="20" cy="8" rx="40" ry="12" fill="#41617e" opacity="0.8" filter="url(#q_b8)"/>
  <ellipse cx="110" cy="28" rx="30" ry="7" fill="#4c6278" opacity="0.8" filter="url(#q_b4)"/>
  <ellipse cx="130" cy="50" rx="26" ry="12" fill="#5f7890" opacity="0.7" filter="url(#q_b4)"/>
  <ellipse cx="15" cy="74" rx="26" ry="6" fill="#b8b4a8" opacity="0.8" filter="url(#q_b4)"/>
  <!-- rock -->
  <path d="M0 80.5 L10.9 78.7 L16.2 74.3 L21.6 71.6 L28.7 67.1 L34.1 69.8 L39.4 68 L44.8 60.9 L53.7 53.7 L64.4 44.8 L71.6 36.8 L76.9 33.7 L82.3 35.9 L85.9 44.8 L90.3 46.6 L96.6 43 L107.3 39.8 L114.4 39.1 L118 43 L125.1 44.8 L132.3 55.5 L135.9 60.9 L143 59.1 L148 61.8 V112 H0Z" fill="url(#q_rock)"/>
  <!-- rock shadows -->
  <path d="M76.9 33.7 L82.3 35.9 L85.9 44.8 L88 60 L90 84 L80 88 L84 60 L80 46Z" fill="#3c2a22" opacity="0.85"/>
  <path d="M53.7 53.7 L64 46 L60 58 L52 70 L44 84 L40 78 L46 64Z" fill="#4a3024" opacity="0.8"/>
  <path d="M118 43 L125.1 44.8 L132.3 55.5 L135.9 60.9 L143 59.1 L148 61.8 V90 L136 82 L128 64Z" fill="#4a4234" opacity="0.85"/>
  <path d="M96 56 L104 50 L108 66 L104 82 L96 78Z" fill="#5a3824" opacity="0.7" filter="url(#q_b1)"/>
  <path d="M62 60 L72 48 L76 62 L70 74 L58 78Z" fill="#e0842a" opacity="0.75" filter="url(#q_b1)"/>
  <path d="M92 50 L100 44 L112 42 L110 52 L100 56Z" fill="#d27a2a" opacity="0.7" filter="url(#q_b1)"/>
  <path d="M10 79 L22 72 L30 68 L36 72 L34 82 L12 86Z" fill="#e8922a" opacity="0.9"/>
  <g fill="#3e2a20" opacity="0.6" filter="url(#q_b1)"><path d="M98 44 L101 60 L99 78 L96 62Z"/><path d="M108 42 L112 58 L110 76 L106 60Z"/><path d="M120 46 L124 62 L122 80 L118 64Z"/><path d="M66 50 L68 64 L64 80 L62 66Z"/><path d="M48 62 L52 70 L46 84 L44 74Z"/><path d="M128 54 L134 66 L134 82 L128 70Z"/></g>
  <path d="M100 46 L118 42 L130 56 L140 62 L148 64 V86 L120 84 L100 80Z" fill="#5a3a2a" opacity="0.45"/>
  <rect x="0" y="30" width="148" height="64" fill="#2a1a14" opacity="0.7" filter="url(#q_tex2)" clip-path="url(#q_rockclip)"/>
  <!-- scree -->
  <path d="M0 92 L12 86 L34 84 L48 88 L64 82 L80 90 L96 84 L112 88 L130 84 L148 92 V112 H0Z" fill="url(#q_scree)"/>
  <path d="M44 92 L62 78 L70 72 L80 90 L94 110 H36Z" fill="#c0a89c" opacity="0.9" filter="url(#q_b1)"/>
  <path d="M108 90 L124 80 L134 78 L148 90 V106 H114Z" fill="#c4aa9a" opacity="0.9" filter="url(#q_b1)"/>
  <path d="M0 90 L20 88 L30 100 L6 112 H0Z" fill="#8a7a50" opacity="0.7" filter="url(#q_b1)"/>
  <path d="M92 84 L98 100 L104 108 L118 114 L100 114 L94 108Z" fill="#d0c4b8" opacity="0.9"/>
  <!-- tree line -->
  <path d="M0 112 L14 108 L40 106 L60 106 L94 106 L100 112 L112 108 L148 106 V120 L100 117 L60 115 L24 120 L0 134Z" fill="#17320e"/><path d="M0 100 L14 96 L30 104 L10 116 L0 120Z" fill="#5a6a3a" opacity="0.8" filter="url(#q_b1)"/>
  <!-- meadow -->
  <path d="M0 132 L22 122 L60 114 L100 116 L148 120 V165 H0Z" fill="url(#q_mead)"/>
  <path d="M100 130 Q120 128 148 140 V165 H120 Q128 150 100 138Z" fill="#1f5a0e" opacity="0.75" filter="url(#q_b2)"/>
  <path d="M0 130 L24 122 L30 132 L10 142 L0 146Z" fill="#1c4a10" opacity="0.8" filter="url(#q_b1)"/>
  <path d="M28 150 Q40 140 50 165 H26Z" fill="#1c4c10" opacity="0.8" filter="url(#q_b1)"/>
  <path d="M72 150 Q84 156 90 165 H70Z" fill="#1f5a0e" opacity="0.7" filter="url(#q_b1)"/>
  <path d="M0 138 L22 136 L26 150 L24 165 H0Z" fill="#4a2c18"/>
  <g clip-path="url(#q_tlclip)"><rect x="0" y="100" width="148" height="36" fill="#0c1c08" opacity="0.6" filter="url(#q_tex)"/></g>
  <rect x="0" y="118" width="148" height="47" fill="#1c4c0c" opacity="0.35" filter="url(#q_tex2)"/>
  <path d="M52 165 Q58 156 66 150 Q72 142 76 134 Q84 130 96 130 M76 134 Q80 128 74 125" stroke="#dadca8" stroke-width="1.3" fill="none"/>
</g>

<!-- ===== P3 clouds & hills ===== -->
<g transform="translate(2,172)" clip-path="url(#q_c3)">
  <rect width="148" height="162" fill="url(#q_sky3)"/>
  <ellipse cx="10" cy="30" rx="22" ry="34" fill="#ecc49c" filter="url(#q_b8)"/>
  <ellipse cx="72" cy="50" rx="34" ry="18" fill="#fae6c8" filter="url(#q_b8)"/>
  <ellipse cx="66" cy="14" rx="44" ry="17" fill="#6c6a6c" filter="url(#q_b8)"/>
  <ellipse cx="128" cy="8" rx="30" ry="10" fill="#9ca8b4" filter="url(#q_b4)"/>
  <ellipse cx="140" cy="20" rx="14" ry="8" fill="#eaddcc" filter="url(#q_b4)"/>
  <!-- dark cloud column -->
  <path d="M24 30 Q36 24 44 30 Q42 40 30 44 Q26 54 28 70 L10 74 Q6 60 14 52 Q8 46 16 40 Q18 32 24 30Z" fill="#54443a" filter="url(#q_b2)"/>
  <path d="M86 40 Q106 26 134 28 Q126 46 100 52 Q90 50 86 40Z" fill="#5e5048" filter="url(#q_b4)"/>
  <ellipse cx="6" cy="68" rx="8" ry="7" fill="#8a6850" filter="url(#q_b2)"/>
  <!-- big right mountain -->
  <path d="M148 36 L130 46 L110 58 L90 68 L68 78 V120 H148Z" fill="url(#q_bigmt)"/>
  <!-- mid mountains -->
  <path d="M0 86 L22 78 L38 73 L48 76 L55 80 L70 76 L85 80 L104 92 L126 102 L148 108 V162 H0Z" fill="url(#q_mt3)"/>
  <path d="M0 82 L18 76 L38 73 L30 84 L12 92 L0 96Z" fill="#3a5a62" opacity="0.8" filter="url(#q_b1)"/>
  <path d="M0 86 L22 78 L38 73 L48 76 L55 80 L70 76 L85 80 L104 92 L126 102 L148 108 V116 L110 104 L80 92 L58 90 L40 84 L0 100Z" fill="#10222a" opacity="0.55" filter="url(#q_b2)"/>
  <path d="M148 36 L130 46 L110 58 L90 68 L148 80Z" fill="#2c363c" opacity="0.6" filter="url(#q_b2)"/>
  <!-- haze / light rays -->
  <path d="M20 60 L148 20 V120 L100 110Z" fill="#c8d4d8" opacity="0.14" filter="url(#q_b4)"/>
  <path d="M116 84 L148 74 V128 L120 116Z" fill="#8aa4ac" opacity="0.5" filter="url(#q_b4)"/>
  <ellipse cx="40" cy="112" rx="40" ry="14" fill="#2c686e" opacity="0.5" filter="url(#q_b4)"/>
  <!-- forest -->
  <path d="M0 146 Q30 136 60 146 Q100 138 148 140 V164 H0Z" fill="#244414" filter="url(#q_b1)"/>
  <ellipse cx="74" cy="151" rx="34" ry="6" fill="#44782a" opacity="0.8" filter="url(#q_b2)"/>
  <ellipse cx="125" cy="148" rx="22" ry="5" fill="#3a6a1e" opacity="0.85" filter="url(#q_b2)"/>
  <g clip-path="url(#q_mt3clip)"><rect x="0" y="70" width="148" height="92" fill="#0c1c1c" opacity="0.4" filter="url(#q_tex2)"/></g>
  <rect x="0" y="138" width="148" height="24" fill="#0c1c08" opacity="0.55" filter="url(#q_tex)"/>
  <!-- roads -->
  <path d="M22 95 Q34 104 42 108 Q70 112 96 113 Q112 110 128 106 M24 112 Q36 122 50 124 Q70 134 80 140 M0 128 Q12 134 20 134 Q28 140 34 140" stroke="#b4d0d0" stroke-width="0.9" fill="none" opacity="0.85"/>
</g>

<!-- ===== P4 temple ===== -->
<g transform="translate(150,172)" clip-path="url(#q_c4)">
  <rect width="148" height="162" fill="url(#q_sky4)"/>
  <ellipse cx="60" cy="30" rx="40" ry="10" fill="#d4e2f2" opacity="0.75" filter="url(#q_b4)"/>
  <ellipse cx="125" cy="55" rx="30" ry="12" fill="#dce8f4" opacity="0.8" filter="url(#q_b4)"/>
  <ellipse cx="110" cy="12" rx="36" ry="6" fill="#c4d8ee" opacity="0.7" filter="url(#q_b4)"/>
  <ellipse cx="90" cy="85" rx="50" ry="10" fill="#e4eef6" opacity="0.8" filter="url(#q_b4)"/>
  <!-- far mountain -->
  <path d="M100 92 L118 88 L130 92 L148 94 V150 H100Z" fill="url(#q_mt4)"/>
  <!-- left big tree -->
  <g filter="url(#q_rough)">
  <path d="M-4 8 Q12 2 22 14 Q36 18 42 34 Q56 44 52 62 Q50 76 40 84 Q44 100 36 118 L38 140 H-4Z" fill="#274818"/>
  <path d="M2 18 Q16 12 26 26 Q38 36 34 52 Q18 62 4 54Z" fill="#4a8226" opacity="0.85"/>
  <path d="M30 40 Q46 42 48 60 Q42 72 30 70Z" fill="#3c6e20" opacity="0.85"/>
  <path d="M6 70 Q20 62 32 74 Q30 88 14 92Z" fill="#427822" opacity="0.8"/>
  <path d="M-4 92 Q16 88 30 102 Q28 124 8 130 H-4Z" fill="#1b3412"/>
  <path d="M12 118 Q24 114 34 124 L34 138 H10Z" fill="#467c20" opacity="0.7"/>
  </g>
  <g clip-path="url(#q_treeclip)"><rect x="0" y="6" width="56" height="134" fill="#0e2008" opacity="0.55" filter="url(#q_tex)"/></g>
  <g clip-path="url(#q_treeclip)"><rect x="0" y="6" width="56" height="134" fill="#7ab03a" opacity="0.35" filter="url(#q_tex2)"/></g>
  <!-- mid small tree -->
  <path d="M34 96 Q40 88 46 92 L46 104 H36Z" fill="#5a86a6" opacity="0.8" filter="url(#q_b1)"/><path d="M30 104 Q40 96 50 100 Q56 88 64 90 L66 140 H30Z" fill="#2c4a1c" filter="url(#q_b1)"/><path d="M42 96 Q52 86 62 92 Q64 106 58 120 H44Z" fill="#5e8a2c" opacity="0.9" filter="url(#q_b1)"/><path d="M32 110 Q40 104 46 112 L46 130 H32Z" fill="#4a7a26" opacity="0.8" filter="url(#q_b1)"/>
  <!-- temple -->
  <path d="M119 17 L116 20.5 L114.4 25 L110.8 26.8 L109 30.4 L105.5 34 L104.6 39.3 L100.1 40.2 L99.8 47.4 L94.8 50 L95.7 57.2 L92.1 62.5 L89.4 63.4 L87.6 58 L85 56.3 L82.3 59.8 L83.2 64.3 L78.7 66 L80.5 72.4 L74.3 74 L73.4 77.7 L68 79.5 L64.4 81.3 L60 82.2 L60.9 92 L57.3 106 L52 117 L46.6 128 L43 135 V152 L116.2 148 L118 135 L116.2 120 L117 81 Z" fill="url(#q_tmp)"/>
  <path d="M114.6 52 L117.4 46 L117.2 122 L114.4 122Z" fill="#6f6e5a"/>
  <path d="M104 127 Q110 122 116 125 L117 146 H106Z" fill="#74684e"/>
  <path d="M70 90 H100 M66 104 H104 M60 118 H102 M50 132 H104" stroke="#1a2418" stroke-width="1.6" opacity="0.7" fill="none"/>
  <path d="M86 64 L100 50 L104 64 L100 120 H84Z" fill="#364434" opacity="0.45" filter="url(#q_b1)"/>
  <rect x="40" y="16" width="80" height="136" fill="#4c5c4a" opacity="0.38" filter="url(#q_tex)" clip-path="url(#q_tclip)"/>
  <path d="M46 128 Q50 104 60 96 Q70 92 72 104 Q66 120 64 138 H46Z" fill="#3c6420" opacity="0.9" filter="url(#q_rough2)"/>
  <path d="M56 100 Q62 92 68 98 Q68 108 62 114Z" fill="#7aa43a" opacity="0.8" filter="url(#q_b1)"/>
  <!-- hedge -->
  <path d="M0 134 L60 132 L104 136 V150 L0 154Z" fill="#172414"/>
  <!-- right tree -->
  <ellipse cx="143" cy="132" rx="9" ry="13" fill="#3e5e3a" filter="url(#q_b1)"/>
  <path d="M118 128 Q126 124 136 136 V148 H118Z" fill="#9ab8a8" opacity="0.6" filter="url(#q_b2)"/>
  <!-- ground -->
  <path d="M0 152 L80 148 L148 144 V162 H0Z" fill="#55554a"/>
  <path d="M0 152 L70 148 L116 146 L60 156 L0 160Z" fill="#4a9a1c"/>
  <path d="M0 158 L60 156 L40 162 H0Z" fill="#3a7a18"/>
  <path d="M60 158 L148 150 V162 H50Z" fill="#7a7668" opacity="0.7"/>
</g>
</svg>
</div>
<div class="abs" style="left:0;top:638px;width:300px;height:38px;background:rgba(18,18,18,0.7)"></div>
<div class="abs" style="left:12px;top:647px;font-size:17px;line-height:24px;color:#fff;white-space:nowrap;letter-spacing:-0.2px">替换文字: 山上的风景</div>
</div>

<div class="fb" style="left:815px;top:39px"></div>
<div class="fb" style="left:815px;top:82px"></div>
<div class="fb" style="left:815px;top:125px"></div>
<div class="fb" style="left:815px;top:168px"></div>
<div class="fb" style="left:815px;top:211px"></div>
<svg class="abs" style="left:815px;top:39px" width="36" height="36" viewBox="0 0 36 36"><path d="M11 18 L18 12.5 L25 18 M11 24.5 L18 19 L25 24.5" fill="none" stroke="#9c9c9c" stroke-width="1.8"/></svg>
<svg class="abs" style="left:815px;top:82px" width="36" height="36" viewBox="0 0 36 36"><rect x="9.5" y="10.5" width="17.5" height="17.5" fill="none" stroke="#7c7c7c" stroke-width="1.6"/><rect x="15.5" y="16.5" width="5.5" height="5.5" fill="#c8c8c8" stroke="#7c7c7c" stroke-width="1.4"/><path d="M18.2 4 V10 M18.2 28.5 V34 M3 19.2 H9 M27.5 19.2 H33.5" stroke="#a8a8a8" stroke-width="1.1" stroke-dasharray="1.4 1.4"/></svg>
<svg class="abs" style="left:815px;top:125px" width="36" height="36" viewBox="0 0 36 36"><path d="M20 13.5 H26 V25.5 H13.5 V22" fill="none" stroke="#7a7a7a" stroke-width="1.4"/><rect x="7" y="7" width="13" height="13" fill="#b8d3f2" stroke="#8aa2c4" stroke-width="1.2"/></svg>
<svg class="abs" style="left:815px;top:168px" width="36" height="36" viewBox="0 0 36 36"><rect x="8.5" y="8.5" width="14" height="14" fill="#f4f4f4" stroke="#8a8a8a" stroke-width="1.3"/><circle cx="12" cy="12.5" r="1.6" fill="none" stroke="#8a8a8a" stroke-width="1"/><path d="M9 20 L12.5 16 L15 19" fill="none" stroke="#8a8a8a" stroke-width="1"/><rect x="14.5" y="14.5" width="14" height="14" fill="#fff" stroke="#8a8a8a" stroke-width="1.3"/><path d="M18 19.5 H26 M18 19.5 l2.2 -2 M17.5 23.5 H25.5 M25.5 23.5 l-2.2 2" fill="none" stroke="#8a8a8a" stroke-width="1.1"/></svg>
<svg class="abs" style="left:815px;top:211px" width="36" height="36" viewBox="0 0 36 36"><path d="M27 9 H8 V27 H17" fill="none" stroke="#8a8a8a" stroke-width="1.4"/><path d="M27 9 V17" fill="none" stroke="#8a8a8a" stroke-width="1.4"/><path d="M12 13 L25.5 25.5" stroke="#8a8a8a" stroke-width="1.5"/><path d="M28 28 L21.5 26.5 L26.5 21.5Z" fill="#8a8a8a"/></svg>
<div class="hd" style="left:495.2px;top:31.2px"></div><div class="hd" style="left:646.2px;top:31.2px"></div><div class="hd" style="left:796.2px;top:31.2px"></div><div class="hd" style="left:495.2px;top:369.7px"></div><div class="hd" style="left:796.2px;top:369.7px"></div><div class="hd" style="left:495.2px;top:707.2px"></div><div class="hd" style="left:646.2px;top:707.2px"></div><div class="hd" style="left:796.2px;top:707.2px"></div>
<div class="abs" style="left:0;top:723px;width:1200px;height:9px;background:#f0f0f0;border-top:1px solid #c4c4c4"></div>
<div class="abs" style="left:0;top:726px;width:1200px;height:1px;background:#c8c8c8"></div>

</div>

<div class="redbox" style="left:39px;top:31px;width:73px;height:73px"></div>
<div class="redbox" style="left:141px;top:84px;width:58px;height:74px"></div>
<div class="abs" style="left:1162px;top:38px;width:40px;height:29px;background:#fff;box-shadow:0 1px 1px rgba(0,0,0,0.35)"></div>
<svg class="abs" style="left:1125px;top:28px" width="50" height="46" viewBox="1125 28 50 46"><path d="M1135 39.6 L1159.5 34.9 Q1162 34.6 1162.6 37 L1167.6 55 Q1168 57.4 1165.6 58.2 L1141.4 67.2 Q1139 67.8 1138.3 65.4 L1132.8 42.4 Q1132.5 40.2 1135 39.6Z" fill="#f1591d"/><path d="M1133 41 L1160.5 35 L1163 44 L1135 50Z" fill="#f8763a" opacity="0.55"/><text x="0" y="10.2" font-size="29" font-weight="bold" font-style="italic" fill="#fff" text-anchor="middle" font-family="Liberation Sans,sans-serif" transform="translate(1150.3 51.2) rotate(-14) scale(1.22 0.98)">S</text></svg>
<div class="abs" style="left:1174px;top:41px;font-size:18px;line-height:26px;font-weight:bold;color:#1b72c9">英</div>


</body>
</html>
